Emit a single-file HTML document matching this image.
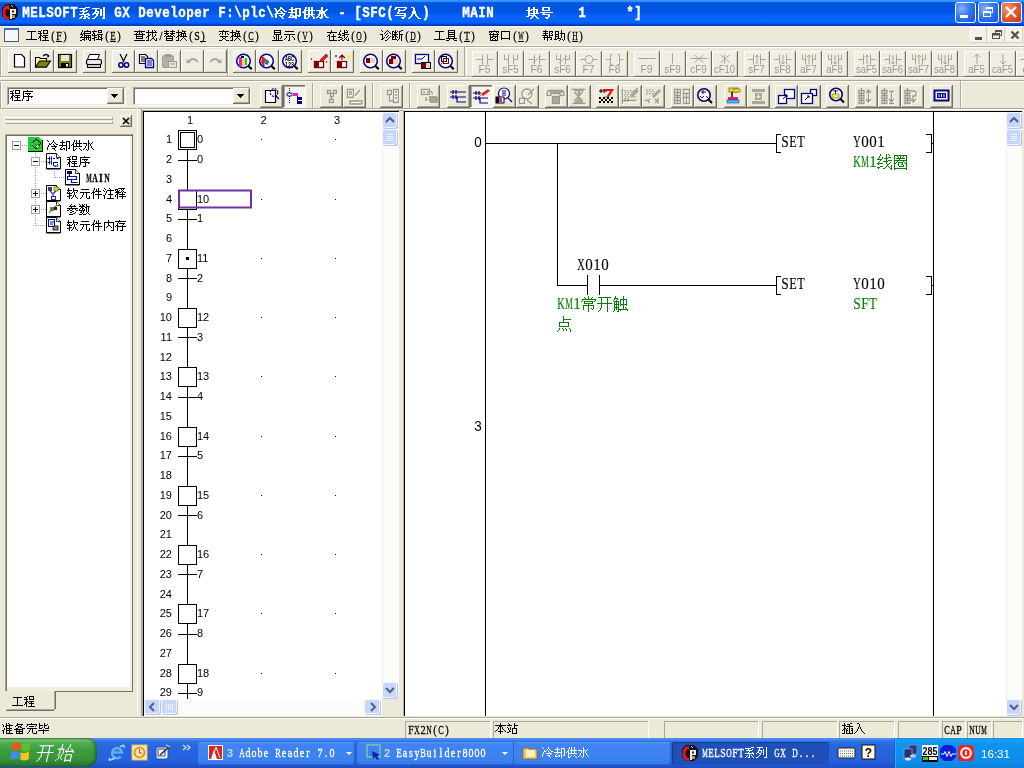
<!DOCTYPE html>
<html><head><meta charset="utf-8"><style>
html,body{margin:0;padding:0;}
body{width:1024px;height:768px;overflow:hidden;position:relative;background:#ECE9D8;font-family:"Liberation Sans",sans-serif;}
body>div{position:absolute;}
svg.ov{position:absolute;left:0;top:0;will-change:transform;}
</style></head><body>
<div style="left:0px;top:0px;width:1024px;height:26px;background:linear-gradient(180deg,#3b97ff 0px,#3090ff 1.5px,#0a5ce8 2.5px,#0054df 5px,#0055e2 12px,#0862fa 16px,#0866ff 22px,#0050e0 24px,#0038b8 25px,#0034b0 26px)"></div>
<div style="left:955px;top:2px;width:21px;height:21px;box-sizing:border-box;border:1px solid #fff;border-radius:3px;background:radial-gradient(circle at 30% 30%,#8AB4FF 0,#3C7BF5 40%,#1F5FE8 75%,#1C56D8 100%)"></div>
<div style="left:978px;top:2px;width:21px;height:21px;box-sizing:border-box;border:1px solid #fff;border-radius:3px;background:radial-gradient(circle at 30% 30%,#8AB4FF 0,#3C7BF5 40%,#1F5FE8 75%,#1C56D8 100%)"></div>
<div style="left:1001px;top:2px;width:21px;height:21px;box-sizing:border-box;border:1px solid #fff;border-radius:3px;background:radial-gradient(circle at 30% 30%,#F4A383 0,#E5603A 40%,#D4441E 75%,#C0391A 100%)"></div>
<div style="left:0px;top:738px;width:1024px;height:30px;background:linear-gradient(180deg,#3a77e6 0px,#5a9cf0 1px,#3d7fe8 2px,#2c6de0 4px,#2764de 10px,#2562dd 22px,#2158d4 27px,#1d4dc0 30px)"></div>
<div style="left:0px;top:738px;width:97px;height:29px;border-radius:0 10px 10px 0;background:linear-gradient(180deg,#3c8f3c 0px,#7cc07a 2px,#4fae4f 5px,#3d9c3d 12px,#3a963a 20px,#2f7f2f 26px,#2a6e2a 29px);box-shadow:inset -2px 0 3px rgba(0,40,0,.45)"></div>
<div style="left:198px;top:742px;width:157px;height:23px;border-radius:3px;background:linear-gradient(180deg,#5a9af7 0,#3f84f2 2px,#3c81f0 18px,#3677e9 23px);box-shadow:inset -1px -1px 0 #2a62d0"></div>
<div style="left:357px;top:742px;width:157px;height:23px;border-radius:3px;background:linear-gradient(180deg,#5a9af7 0,#3f84f2 2px,#3c81f0 18px,#3677e9 23px);box-shadow:inset -1px -1px 0 #2a62d0"></div>
<div style="left:514px;top:742px;width:157px;height:23px;border-radius:3px;background:linear-gradient(180deg,#5a9af7 0,#3f84f2 2px,#3c81f0 18px,#3677e9 23px);box-shadow:inset -1px -1px 0 #2a62d0"></div>
<div style="left:672px;top:742px;width:157px;height:23px;border-radius:3px;background:#1E50B8;box-shadow:inset 1px 1px 1px #123b8e"></div>
<div style="left:894px;top:738px;width:130px;height:30px;background:linear-gradient(180deg,#1a8ee8 0,#16a0f3 2px,#0f94ee 6px,#0d8cea 24px,#0b7fda 30px);box-shadow:inset 1px 0 0 #0a5fc8, inset 2px 0 0 #3aa8f5"></div>
<svg class="ov" width="1024" height="768" viewBox="0 0 1024 768"><path fill="#fff" d="M85 7h5v1h-5zM79 8h7v1h-7zM83 9h2v1h-2zM82 10h2v1h-2zM86 10h2v1h-2zM80 11h7v1h-7zM83 12h2v1h-2zM82 13h2v1h-2zM87 13h2v1h-2zM79 14h11v1h-11zM84 15h2v1h-2zM88 15h2v1h-2zM81 16h2v1h-2zM84 16h4v1h-4zM80 17h2v1h-2zM84 17h2v1h-2zM87 17h2v1h-2zM79 18h2v1h-2zM83 18h3v1h-3zM88 18h2v1h-2zM103 7h2v1h-2zM92 8h8v1h-8zM103 8h2v1h-2zM95 9h2v1h-2zM100 9h2v1h-2zM103 9h2v1h-2zM95 10h2v1h-2zM100 10h2v1h-2zM103 10h2v1h-2zM95 11h4v1h-4zM100 11h2v1h-2zM103 11h2v1h-2zM94 12h2v1h-2zM97 12h2v1h-2zM100 12h2v1h-2zM103 12h2v1h-2zM93 13h6v1h-6zM100 13h2v1h-2zM103 13h2v1h-2zM92 14h2v1h-2zM96 14h2v1h-2zM100 14h2v1h-2zM103 14h2v1h-2zM96 15h2v1h-2zM100 15h2v1h-2zM103 15h2v1h-2zM95 16h2v1h-2zM103 16h2v1h-2zM94 17h2v1h-2zM103 17h2v1h-2zM92 18h3v1h-3zM102 18h3v1h-3zM280 7h2v1h-2zM274 8h2v1h-2zM280 8h3v1h-3zM275 9h2v1h-2zM279 9h2v1h-2zM282 9h2v1h-2zM275 10h2v1h-2zM278 10h2v1h-2zM283 10h2v1h-2zM276 11h3v1h-3zM280 11h2v1h-2zM284 11h3v1h-3zM276 12h2v1h-2zM281 12h2v1h-2zM275 13h10v1h-10zM274 14h3v1h-3zM283 14h2v1h-2zM275 15h2v1h-2zM279 15h2v1h-2zM282 15h2v1h-2zM275 16h2v1h-2zM280 16h3v1h-3zM275 17h2v1h-2zM281 17h2v1h-2zM282 18h2v1h-2zM291 7h2v1h-2zM291 8h2v1h-2zM295 8h6v1h-6zM289 9h8v1h-8zM299 9h2v1h-2zM291 10h2v1h-2zM295 10h2v1h-2zM299 10h2v1h-2zM291 11h2v1h-2zM295 11h2v1h-2zM299 11h2v1h-2zM288 12h9v1h-9zM299 12h2v1h-2zM291 13h2v1h-2zM295 13h2v1h-2zM299 13h2v1h-2zM290 14h2v1h-2zM295 14h2v1h-2zM299 14h2v1h-2zM290 15h4v1h-4zM295 15h6v1h-6zM289 16h2v1h-2zM292 16h5v1h-5zM298 16h2v1h-2zM288 17h9v1h-9zM295 18h2v1h-2zM305 7h2v1h-2zM308 7h2v1h-2zM311 7h2v1h-2zM305 8h2v1h-2zM308 8h2v1h-2zM311 8h2v1h-2zM304 9h2v1h-2zM308 9h2v1h-2zM311 9h2v1h-2zM304 10h11v1h-11zM303 11h3v1h-3zM308 11h2v1h-2zM311 11h2v1h-2zM302 12h4v1h-4zM308 12h2v1h-2zM311 12h2v1h-2zM304 13h2v1h-2zM308 13h2v1h-2zM311 13h2v1h-2zM304 14h11v1h-11zM304 15h2v1h-2zM308 15h2v1h-2zM311 15h2v1h-2zM304 16h2v1h-2zM308 16h2v1h-2zM312 16h2v1h-2zM304 17h2v1h-2zM307 17h2v1h-2zM313 17h2v1h-2zM304 18h4v1h-4zM313 18h2v1h-2zM321 7h2v1h-2zM321 8h2v1h-2zM321 9h2v1h-2zM326 9h2v1h-2zM316 10h7v1h-7zM325 10h2v1h-2zM319 11h7v1h-7zM319 12h6v1h-6zM319 13h6v1h-6zM318 14h2v1h-2zM321 14h2v1h-2zM324 14h2v1h-2zM318 15h2v1h-2zM321 15h2v1h-2zM324 15h2v1h-2zM317 16h2v1h-2zM321 16h2v1h-2zM325 16h2v1h-2zM316 17h2v1h-2zM319 17h4v1h-4zM326 17h3v1h-3zM320 18h2v1h-2zM395 7h12v1h-12zM395 8h2v1h-2zM405 8h2v1h-2zM394 9h2v1h-2zM398 9h2v1h-2zM404 9h2v1h-2zM398 10h7v1h-7zM398 11h2v1h-2zM397 12h2v1h-2zM397 13h9v1h-9zM404 14h2v1h-2zM395 15h11v1h-11zM404 16h2v1h-2zM401 17h4v1h-4zM402 18h2v1h-2zM411 7h3v1h-3zM413 8h2v1h-2zM413 9h2v1h-2zM413 10h2v1h-2zM412 11h4v1h-4zM412 12h4v1h-4zM412 13h4v1h-4zM411 14h2v1h-2zM415 14h2v1h-2zM411 15h2v1h-2zM415 15h2v1h-2zM410 16h2v1h-2zM416 16h2v1h-2zM409 17h2v1h-2zM417 17h2v1h-2zM408 18h2v1h-2zM418 18h3v1h-3zM528 7h2v1h-2zM533 7h2v1h-2zM528 8h2v1h-2zM533 8h2v1h-2zM528 9h2v1h-2zM531 9h7v1h-7zM526 10h6v1h-6zM533 10h2v1h-2zM536 10h2v1h-2zM528 11h2v1h-2zM533 11h2v1h-2zM536 11h2v1h-2zM528 12h2v1h-2zM533 12h2v1h-2zM536 12h2v1h-2zM528 13h11v1h-11zM528 14h2v1h-2zM533 14h2v1h-2zM528 15h8v1h-8zM526 16h3v1h-3zM532 16h2v1h-2zM535 16h2v1h-2zM531 17h2v1h-2zM536 17h2v1h-2zM530 18h2v1h-2zM537 18h2v1h-2zM542 7h8v1h-8zM542 8h2v1h-2zM548 8h2v1h-2zM542 9h2v1h-2zM548 9h2v1h-2zM542 10h8v1h-8zM540 12h13v1h-13zM543 13h2v1h-2zM542 14h8v1h-8zM548 15h2v1h-2zM548 16h2v1h-2zM545 17h4v1h-4zM546 18h2v1h-2z"/><g font-family="Liberation Mono" font-size="13.4" font-weight="bold" fill="#fff" stroke="#fff" stroke-width="0.35"><text transform="translate(26.00 17) scale(0.933 1.1)" text-anchor="middle">M</text><text transform="translate(34.00 17) scale(0.933 1.1)" text-anchor="middle">E</text><text transform="translate(42.00 17) scale(0.933 1.1)" text-anchor="middle">L</text><text transform="translate(50.00 17) scale(0.933 1.1)" text-anchor="middle">S</text><text transform="translate(58.00 17) scale(0.933 1.1)" text-anchor="middle">O</text><text transform="translate(66.00 17) scale(0.933 1.1)" text-anchor="middle">F</text><text transform="translate(74.00 17) scale(0.933 1.1)" text-anchor="middle">T</text><text transform="translate(118.00 17) scale(0.933 1.1)" text-anchor="middle">G</text><text transform="translate(126.00 17) scale(0.933 1.1)" text-anchor="middle">X</text><text transform="translate(142.00 17) scale(0.933 1.1)" text-anchor="middle">D</text><text transform="translate(150.00 17) scale(0.933 1.1)" text-anchor="middle">e</text><text transform="translate(158.00 17) scale(0.933 1.1)" text-anchor="middle">v</text><text transform="translate(166.00 17) scale(0.933 1.1)" text-anchor="middle">e</text><text transform="translate(174.00 17) scale(0.933 1.1)" text-anchor="middle">l</text><text transform="translate(182.00 17) scale(0.933 1.1)" text-anchor="middle">o</text><text transform="translate(190.00 17) scale(0.933 1.1)" text-anchor="middle">p</text><text transform="translate(198.00 17) scale(0.933 1.1)" text-anchor="middle">e</text><text transform="translate(206.00 17) scale(0.933 1.1)" text-anchor="middle">r</text><text transform="translate(222.00 17) scale(0.933 1.1)" text-anchor="middle">F</text><text transform="translate(230.00 17) scale(0.933 1.1)" text-anchor="middle">:</text><text transform="translate(238.00 17) scale(0.933 1.1)" text-anchor="middle">\</text><text transform="translate(246.00 17) scale(0.933 1.1)" text-anchor="middle">p</text><text transform="translate(254.00 17) scale(0.933 1.1)" text-anchor="middle">l</text><text transform="translate(262.00 17) scale(0.933 1.1)" text-anchor="middle">c</text><text transform="translate(270.00 17) scale(0.933 1.1)" text-anchor="middle">\</text><text transform="translate(342.00 17) scale(0.933 1.1)" text-anchor="middle">-</text><text transform="translate(358.00 17) scale(0.933 1.1)" text-anchor="middle">[</text><text transform="translate(366.00 17) scale(0.933 1.1)" text-anchor="middle">S</text><text transform="translate(374.00 17) scale(0.933 1.1)" text-anchor="middle">F</text><text transform="translate(382.00 17) scale(0.933 1.1)" text-anchor="middle">C</text><text transform="translate(390.00 17) scale(0.933 1.1)" text-anchor="middle">(</text><text transform="translate(426.00 17) scale(0.933 1.1)" text-anchor="middle">)</text><text transform="translate(466.00 17) scale(0.933 1.1)" text-anchor="middle">M</text><text transform="translate(474.00 17) scale(0.933 1.1)" text-anchor="middle">A</text><text transform="translate(482.00 17) scale(0.933 1.1)" text-anchor="middle">I</text><text transform="translate(490.00 17) scale(0.933 1.1)" text-anchor="middle">N</text><text transform="translate(582.00 17) scale(0.933 1.1)" text-anchor="middle">1</text><text transform="translate(630.00 17) scale(0.933 1.1)" text-anchor="middle">*</text><text transform="translate(638.00 17) scale(0.933 1.1)" text-anchor="middle">]</text></g>
<path d="M6 4h8l4 4v8l-4 4h-8l-4-4v-8z" fill="#141418"/><path d="M9 6.5q-5 0-5 6t5 6" stroke="#E8141A" stroke-width="3" fill="none"/><path d="M6 8h3v2" stroke="#F04020" fill="none"/><path d="M10 9h6v5h-4v5h-2z" fill="#F2EEE6"/><rect x="12" y="10.5" width="2" height="2" fill="#222"/><rect x="12" y="15" width="3" height="3" fill="#B09A60"/><path d="M11 5l2 2" stroke="#A0E0A0"/>
<rect x="960" y="15" width="8" height="3" fill="#fff" />
<rect x="983.5" y="11.5" width="7" height="5" fill="none" stroke="#fff" stroke-width="1"/><rect x="983" y="11" width="8" height="2" fill="#fff"/><path d="M986.5 9.5v-2h6v5h-2" fill="none" stroke="#fff" stroke-width="1"/><rect x="986" y="7" width="7" height="2" fill="#fff"/>
<path d="M1006 7l10 10M1016 7l-10 10" stroke="#fff" stroke-width="2.2"/>
<rect x="0" y="26" width="1024" height="20" fill="#ECE9D8" />
<rect x="0" y="26" width="1024" height="1" fill="#F2F6FF" />
<rect x="0" y="45" width="1024" height="1" fill="#FBFAF4" />
<rect x="4.5" y="28.5" width="14" height="13" fill="#F4F7FC" stroke="#505A6E"/><rect x="4" y="28" width="15" height="2" fill="#3A6FCC"/>
<rect x="970" y="27" width="17" height="16" fill="#F3F1E8" />
<rect x="970" y="27" width="17" height="1" fill="#FFFFFF" />
<rect x="970" y="27" width="1" height="16" fill="#FFFFFF" />
<rect x="970" y="42" width="17" height="1" fill="#D8D4C4" />
<rect x="986" y="27" width="1" height="16" fill="#D8D4C4" />
<rect x="988" y="27" width="17" height="16" fill="#F3F1E8" />
<rect x="988" y="27" width="17" height="1" fill="#FFFFFF" />
<rect x="988" y="27" width="1" height="16" fill="#FFFFFF" />
<rect x="988" y="42" width="17" height="1" fill="#D8D4C4" />
<rect x="1004" y="27" width="1" height="16" fill="#D8D4C4" />
<rect x="1006" y="27" width="17" height="16" fill="#F3F1E8" />
<rect x="1006" y="27" width="17" height="1" fill="#FFFFFF" />
<rect x="1006" y="27" width="1" height="16" fill="#FFFFFF" />
<rect x="1006" y="42" width="17" height="1" fill="#D8D4C4" />
<rect x="1022" y="27" width="1" height="16" fill="#D8D4C4" />
<rect x="975" y="37" width="7" height="3" fill="#505050" />
<g fill="none" stroke="#505050" stroke-width="1"><rect x="992.5" y="33.5" width="7" height="5"/><path d="M992 34.5h8" stroke-width="2"/><path d="M995.5 33v-2.5h6v5h-2"/><path d="M995 31h7" stroke-width="2"/></g>
<path d="M1011.5 31.5l7 7M1018.5 31.5l-7 7" stroke="#505050" stroke-width="2.2"/>
<path fill="#000" d="M27 31h9v1h-9zM31 32h1v1h-1zM31 33h1v1h-1zM31 34h1v1h-1zM31 35h1v1h-1zM31 36h1v1h-1zM31 37h1v1h-1zM31 38h1v1h-1zM26 39h11v1h-11zM41 30h1v1h-1zM43 30h5v1h-5zM38 31h3v1h-3zM43 31h1v1h-1zM47 31h1v1h-1zM40 32h1v1h-1zM43 32h1v1h-1zM47 32h1v1h-1zM38 33h4v1h-4zM43 33h5v1h-5zM40 34h1v1h-1zM40 35h2v1h-2zM43 35h5v1h-5zM39 36h2v1h-2zM42 36h1v1h-1zM45 36h1v1h-1zM39 37h2v1h-2zM43 37h5v1h-5zM38 38h1v1h-1zM40 38h1v1h-1zM45 38h1v1h-1zM40 39h1v1h-1zM45 39h1v1h-1zM40 40h1v1h-1zM42 40h7v1h-7z"/><g font-family="Liberation Serif" font-size="13" font-weight="normal" fill="#000" stroke="#000" stroke-width="0.3"><text transform="translate(53.00 40) scale(0.800 1)" text-anchor="middle">(</text><text transform="translate(59.00 40) scale(0.761 1)" text-anchor="middle">F</text><text transform="translate(65.00 40) scale(0.800 1)" text-anchor="middle">)</text></g>
<rect x="56" y="41" width="6" height="1" fill="#000" />
<path fill="#000" d="M82 30h1v1h-1zM87 30h1v1h-1zM82 31h1v1h-1zM84 31h7v1h-7zM81 32h1v1h-1zM84 32h1v1h-1zM90 32h1v1h-1zM81 33h1v1h-1zM83 33h8v1h-8zM80 34h3v1h-3zM84 34h1v1h-1zM82 35h1v1h-1zM84 35h7v1h-7zM81 36h1v1h-1zM84 36h1v1h-1zM86 36h1v1h-1zM88 36h1v1h-1zM90 36h1v1h-1zM80 37h11v1h-11zM84 38h1v1h-1zM86 38h1v1h-1zM88 38h1v1h-1zM90 38h1v1h-1zM82 39h3v1h-3zM86 39h1v1h-1zM88 39h1v1h-1zM90 39h1v1h-1zM80 40h2v1h-2zM84 40h1v1h-1zM89 40h2v1h-2zM94 30h1v1h-1zM98 30h4v1h-4zM92 31h5v1h-5zM98 31h1v1h-1zM101 31h1v1h-1zM93 32h1v1h-1zM98 32h4v1h-4zM93 33h2v1h-2zM92 34h1v1h-1zM94 34h1v1h-1zM97 34h6v1h-6zM92 35h5v1h-5zM98 35h1v1h-1zM101 35h1v1h-1zM94 36h1v1h-1zM98 36h2v1h-2zM101 36h1v1h-1zM94 37h3v1h-3zM98 37h1v1h-1zM100 37h2v1h-2zM92 38h3v1h-3zM98 38h1v1h-1zM101 38h2v1h-2zM94 39h1v1h-1zM96 39h6v1h-6zM94 40h1v1h-1zM101 40h1v1h-1z"/><g font-family="Liberation Serif" font-size="13" font-weight="normal" fill="#000" stroke="#000" stroke-width="0.3"><text transform="translate(107.00 40) scale(0.800 1)" text-anchor="middle">(</text><text transform="translate(113.00 40) scale(0.693 1)" text-anchor="middle">E</text><text transform="translate(119.00 40) scale(0.800 1)" text-anchor="middle">)</text></g>
<rect x="110" y="41" width="6" height="1" fill="#000" />
<path fill="#000" d="M139 30h1v1h-1zM134 31h11v1h-11zM137 32h1v1h-1zM139 32h1v1h-1zM141 32h1v1h-1zM136 33h1v1h-1zM139 33h1v1h-1zM142 33h1v1h-1zM134 34h11v1h-11zM136 35h1v1h-1zM142 35h1v1h-1zM136 36h7v1h-7zM136 37h1v1h-1zM142 37h1v1h-1zM136 38h7v1h-7zM134 40h11v1h-11zM148 30h1v1h-1zM152 30h1v1h-1zM154 30h1v1h-1zM148 31h1v1h-1zM152 31h1v1h-1zM155 31h1v1h-1zM146 32h11v1h-11zM148 33h1v1h-1zM152 33h1v1h-1zM148 34h1v1h-1zM150 34h1v1h-1zM152 34h1v1h-1zM155 34h1v1h-1zM148 35h2v1h-2zM152 35h1v1h-1zM155 35h1v1h-1zM147 36h2v1h-2zM152 36h1v1h-1zM154 36h1v1h-1zM146 37h1v1h-1zM148 37h1v1h-1zM153 37h1v1h-1zM148 38h1v1h-1zM152 38h2v1h-2zM156 38h1v1h-1zM148 39h1v1h-1zM151 39h1v1h-1zM154 39h1v1h-1zM156 39h1v1h-1zM146 40h3v1h-3zM150 40h1v1h-1zM155 40h2v1h-2zM166 30h1v1h-1zM172 30h1v1h-1zM164 31h5v1h-5zM170 31h5v1h-5zM166 32h1v1h-1zM172 32h1v1h-1zM164 33h5v1h-5zM170 33h5v1h-5zM166 34h2v1h-2zM171 34h2v1h-2zM165 35h1v1h-1zM168 35h1v1h-1zM170 35h1v1h-1zM173 35h1v1h-1zM164 36h1v1h-1zM166 36h7v1h-7zM174 36h1v1h-1zM166 37h1v1h-1zM172 37h1v1h-1zM166 38h7v1h-7zM166 39h1v1h-1zM172 39h1v1h-1zM166 40h7v1h-7zM178 30h1v1h-1zM182 30h1v1h-1zM178 31h1v1h-1zM182 31h4v1h-4zM176 32h6v1h-6zM184 32h1v1h-1zM178 33h1v1h-1zM181 33h5v1h-5zM178 34h1v1h-1zM180 34h2v1h-2zM183 34h1v1h-1zM185 34h1v1h-1zM178 35h2v1h-2zM181 35h1v1h-1zM183 35h1v1h-1zM185 35h1v1h-1zM177 36h2v1h-2zM180 36h7v1h-7zM176 37h1v1h-1zM178 37h1v1h-1zM183 37h1v1h-1zM178 38h1v1h-1zM182 38h1v1h-1zM184 38h1v1h-1zM178 39h1v1h-1zM181 39h1v1h-1zM185 39h1v1h-1zM176 40h3v1h-3zM180 40h1v1h-1zM186 40h1v1h-1z"/><g font-family="Liberation Serif" font-size="13" font-weight="normal" fill="#000" stroke="#000" stroke-width="0.3"><text transform="translate(161.00 40) scale(0.800 1)" text-anchor="middle">/</text><text transform="translate(191.00 40) scale(0.800 1)" text-anchor="middle">(</text><text transform="translate(197.00 40) scale(0.761 1)" text-anchor="middle">S</text><text transform="translate(203.00 40) scale(0.800 1)" text-anchor="middle">)</text></g>
<rect x="200" y="41" width="6" height="1" fill="#000" />
<path fill="#000" d="M223 30h1v1h-1zM219 31h10v1h-10zM222 32h1v1h-1zM225 32h1v1h-1zM220 33h1v1h-1zM222 33h1v1h-1zM225 33h1v1h-1zM227 33h1v1h-1zM219 34h1v1h-1zM222 34h1v1h-1zM225 34h1v1h-1zM228 34h1v1h-1zM220 36h8v1h-8zM222 37h1v1h-1zM225 37h1v1h-1zM223 38h2v1h-2zM222 39h1v1h-1zM225 39h1v1h-1zM219 40h3v1h-3zM226 40h3v1h-3zM232 30h1v1h-1zM236 30h1v1h-1zM232 31h1v1h-1zM236 31h4v1h-4zM230 32h6v1h-6zM238 32h1v1h-1zM232 33h1v1h-1zM235 33h5v1h-5zM232 34h1v1h-1zM234 34h2v1h-2zM237 34h1v1h-1zM239 34h1v1h-1zM232 35h2v1h-2zM235 35h1v1h-1zM237 35h1v1h-1zM239 35h1v1h-1zM231 36h2v1h-2zM234 36h7v1h-7zM230 37h1v1h-1zM232 37h1v1h-1zM237 37h1v1h-1zM232 38h1v1h-1zM236 38h1v1h-1zM238 38h1v1h-1zM232 39h1v1h-1zM235 39h1v1h-1zM239 39h1v1h-1zM230 40h3v1h-3zM234 40h1v1h-1zM240 40h1v1h-1z"/><g font-family="Liberation Serif" font-size="13" font-weight="normal" fill="#000" stroke="#000" stroke-width="0.3"><text transform="translate(245.00 40) scale(0.800 1)" text-anchor="middle">(</text><text transform="translate(251.00 40) scale(0.634 1)" text-anchor="middle">C</text><text transform="translate(257.00 40) scale(0.800 1)" text-anchor="middle">)</text></g>
<rect x="248" y="41" width="6" height="1" fill="#000" />
<path fill="#000" d="M274 30h7v1h-7zM274 31h1v1h-1zM280 31h1v1h-1zM274 32h7v1h-7zM274 33h1v1h-1zM280 33h1v1h-1zM274 34h7v1h-7zM276 35h1v1h-1zM278 35h1v1h-1zM273 36h1v1h-1zM276 36h1v1h-1zM278 36h1v1h-1zM281 36h1v1h-1zM274 37h1v1h-1zM276 37h1v1h-1zM278 37h1v1h-1zM281 37h1v1h-1zM274 38h1v1h-1zM276 38h1v1h-1zM278 38h1v1h-1zM280 38h1v1h-1zM276 39h1v1h-1zM278 39h1v1h-1zM272 40h11v1h-11zM285 31h9v1h-9zM284 34h11v1h-11zM289 35h1v1h-1zM286 36h1v1h-1zM289 36h1v1h-1zM292 36h1v1h-1zM286 37h1v1h-1zM289 37h1v1h-1zM293 37h1v1h-1zM285 38h1v1h-1zM289 38h1v1h-1zM294 38h1v1h-1zM284 39h1v1h-1zM289 39h1v1h-1zM294 39h1v1h-1zM288 40h2v1h-2z"/><g font-family="Liberation Serif" font-size="13" font-weight="normal" fill="#000" stroke="#000" stroke-width="0.3"><text transform="translate(299.00 40) scale(0.800 1)" text-anchor="middle">(</text><text transform="translate(305.00 40) scale(0.586 1)" text-anchor="middle">V</text><text transform="translate(311.00 40) scale(0.800 1)" text-anchor="middle">)</text></g>
<rect x="302" y="41" width="6" height="1" fill="#000" />
<path fill="#000" d="M331 30h1v1h-1zM331 31h1v1h-1zM327 32h10v1h-10zM330 33h1v1h-1zM329 34h1v1h-1zM333 34h1v1h-1zM328 35h2v1h-2zM333 35h1v1h-1zM327 36h1v1h-1zM329 36h1v1h-1zM331 36h5v1h-5zM329 37h1v1h-1zM333 37h1v1h-1zM329 38h1v1h-1zM333 38h1v1h-1zM329 39h1v1h-1zM333 39h1v1h-1zM329 40h8v1h-8zM340 30h1v1h-1zM344 30h1v1h-1zM346 30h1v1h-1zM340 31h1v1h-1zM344 31h1v1h-1zM347 31h1v1h-1zM339 32h1v1h-1zM344 32h4v1h-4zM339 33h1v1h-1zM342 33h3v1h-3zM338 34h3v1h-3zM344 34h5v1h-5zM340 35h1v1h-1zM342 35h3v1h-3zM339 36h1v1h-1zM344 36h1v1h-1zM347 36h1v1h-1zM338 37h4v1h-4zM344 37h1v1h-1zM346 37h1v1h-1zM342 38h1v1h-1zM345 38h1v1h-1zM348 38h1v1h-1zM340 39h2v1h-2zM344 39h1v1h-1zM346 39h1v1h-1zM348 39h1v1h-1zM338 40h2v1h-2zM342 40h2v1h-2zM347 40h2v1h-2z"/><g font-family="Liberation Serif" font-size="13" font-weight="normal" fill="#000" stroke="#000" stroke-width="0.3"><text transform="translate(353.00 40) scale(0.800 1)" text-anchor="middle">(</text><text transform="translate(359.00 40) scale(0.586 1)" text-anchor="middle">O</text><text transform="translate(365.00 40) scale(0.800 1)" text-anchor="middle">)</text></g>
<rect x="356" y="41" width="6" height="1" fill="#000" />
<path fill="#000" d="M381 30h1v1h-1zM387 30h1v1h-1zM382 31h1v1h-1zM386 31h1v1h-1zM388 31h1v1h-1zM385 32h1v1h-1zM389 32h1v1h-1zM384 33h1v1h-1zM387 33h1v1h-1zM390 33h1v1h-1zM380 34h3v1h-3zM386 34h1v1h-1zM382 35h1v1h-1zM385 35h1v1h-1zM388 35h1v1h-1zM382 36h1v1h-1zM387 36h1v1h-1zM390 36h1v1h-1zM382 37h1v1h-1zM384 37h1v1h-1zM386 37h1v1h-1zM389 37h1v1h-1zM382 38h2v1h-2zM388 38h1v1h-1zM381 39h2v1h-2zM387 39h1v1h-1zM385 40h2v1h-2zM395 30h1v1h-1zM401 30h2v1h-2zM392 31h2v1h-2zM395 31h1v1h-1zM397 31h1v1h-1zM399 31h2v1h-2zM392 32h1v1h-1zM394 32h3v1h-3zM399 32h1v1h-1zM392 33h1v1h-1zM395 33h1v1h-1zM399 33h1v1h-1zM392 34h6v1h-6zM399 34h4v1h-4zM392 35h1v1h-1zM394 35h2v1h-2zM399 35h1v1h-1zM401 35h1v1h-1zM392 36h2v1h-2zM395 36h2v1h-2zM399 36h1v1h-1zM401 36h1v1h-1zM392 37h2v1h-2zM395 37h1v1h-1zM397 37h1v1h-1zM399 37h1v1h-1zM401 37h1v1h-1zM392 38h1v1h-1zM395 38h1v1h-1zM399 38h1v1h-1zM401 38h1v1h-1zM392 39h5v1h-5zM398 39h1v1h-1zM401 39h1v1h-1zM397 40h1v1h-1zM401 40h1v1h-1z"/><g font-family="Liberation Serif" font-size="13" font-weight="normal" fill="#000" stroke="#000" stroke-width="0.3"><text transform="translate(407.00 40) scale(0.800 1)" text-anchor="middle">(</text><text transform="translate(413.00 40) scale(0.586 1)" text-anchor="middle">D</text><text transform="translate(419.00 40) scale(0.800 1)" text-anchor="middle">)</text></g>
<rect x="410" y="41" width="6" height="1" fill="#000" />
<path fill="#000" d="M435 31h9v1h-9zM439 32h1v1h-1zM439 33h1v1h-1zM439 34h1v1h-1zM439 35h1v1h-1zM439 36h1v1h-1zM439 37h1v1h-1zM439 38h1v1h-1zM434 39h11v1h-11zM448 30h7v1h-7zM448 31h1v1h-1zM454 31h1v1h-1zM448 32h7v1h-7zM448 33h1v1h-1zM454 33h1v1h-1zM448 34h7v1h-7zM448 35h1v1h-1zM454 35h1v1h-1zM448 36h7v1h-7zM448 37h1v1h-1zM454 37h1v1h-1zM446 38h11v1h-11zM449 39h1v1h-1zM453 39h1v1h-1zM446 40h3v1h-3zM454 40h3v1h-3z"/><g font-family="Liberation Serif" font-size="13" font-weight="normal" fill="#000" stroke="#000" stroke-width="0.3"><text transform="translate(461.00 40) scale(0.800 1)" text-anchor="middle">(</text><text transform="translate(467.00 40) scale(0.693 1)" text-anchor="middle">T</text><text transform="translate(473.00 40) scale(0.800 1)" text-anchor="middle">)</text></g>
<rect x="464" y="41" width="6" height="1" fill="#000" />
<path fill="#000" d="M494 30h1v1h-1zM489 31h10v1h-10zM489 32h1v1h-1zM491 32h1v1h-1zM496 32h1v1h-1zM498 32h1v1h-1zM490 33h1v1h-1zM493 33h1v1h-1zM497 33h1v1h-1zM489 34h10v1h-10zM490 35h1v1h-1zM493 35h1v1h-1zM497 35h1v1h-1zM490 36h1v1h-1zM492 36h6v1h-6zM490 37h3v1h-3zM495 37h1v1h-1zM497 37h1v1h-1zM490 38h1v1h-1zM493 38h2v1h-2zM497 38h1v1h-1zM490 39h1v1h-1zM492 39h1v1h-1zM495 39h1v1h-1zM497 39h1v1h-1zM490 40h8v1h-8zM501 31h9v1h-9zM501 32h1v1h-1zM509 32h1v1h-1zM501 33h1v1h-1zM509 33h1v1h-1zM501 34h1v1h-1zM509 34h1v1h-1zM501 35h1v1h-1zM509 35h1v1h-1zM501 36h1v1h-1zM509 36h1v1h-1zM501 37h1v1h-1zM509 37h1v1h-1zM501 38h9v1h-9zM501 39h1v1h-1zM509 39h1v1h-1z"/><g font-family="Liberation Serif" font-size="13" font-weight="normal" fill="#000" stroke="#000" stroke-width="0.3"><text transform="translate(515.00 40) scale(0.800 1)" text-anchor="middle">(</text><text transform="translate(521.00 40) scale(0.448 1)" text-anchor="middle">W</text><text transform="translate(527.00 40) scale(0.800 1)" text-anchor="middle">)</text></g>
<rect x="518" y="41" width="6" height="1" fill="#000" />
<path fill="#000" d="M545 30h1v1h-1zM543 31h5v1h-5zM549 31h4v1h-4zM545 32h1v1h-1zM549 32h1v1h-1zM552 32h1v1h-1zM543 33h5v1h-5zM549 33h1v1h-1zM551 33h1v1h-1zM545 34h1v1h-1zM549 34h1v1h-1zM552 34h1v1h-1zM542 35h6v1h-6zM549 35h4v1h-4zM544 36h1v1h-1zM547 36h1v1h-1zM549 36h1v1h-1zM543 37h9v1h-9zM544 38h1v1h-1zM547 38h1v1h-1zM551 38h1v1h-1zM544 39h1v1h-1zM547 39h1v1h-1zM550 39h2v1h-2zM547 40h1v1h-1zM561 30h1v1h-1zM555 31h4v1h-4zM561 31h1v1h-1zM555 32h1v1h-1zM558 32h1v1h-1zM561 32h1v1h-1zM555 33h1v1h-1zM558 33h1v1h-1zM560 33h5v1h-5zM555 34h4v1h-4zM561 34h1v1h-1zM564 34h1v1h-1zM555 35h1v1h-1zM558 35h1v1h-1zM561 35h1v1h-1zM564 35h1v1h-1zM555 36h4v1h-4zM561 36h1v1h-1zM564 36h1v1h-1zM555 37h1v1h-1zM558 37h1v1h-1zM561 37h1v1h-1zM564 37h1v1h-1zM555 38h1v1h-1zM557 38h4v1h-4zM564 38h1v1h-1zM554 39h3v1h-3zM560 39h1v1h-1zM562 39h1v1h-1zM564 39h1v1h-1zM559 40h1v1h-1zM563 40h1v1h-1z"/><g font-family="Liberation Serif" font-size="13" font-weight="normal" fill="#000" stroke="#000" stroke-width="0.3"><text transform="translate(569.00 40) scale(0.800 1)" text-anchor="middle">(</text><text transform="translate(575.00 40) scale(0.586 1)" text-anchor="middle">H</text><text transform="translate(581.00 40) scale(0.800 1)" text-anchor="middle">)</text></g>
<rect x="572" y="41" width="6" height="1" fill="#000" />
<rect x="0" y="46" width="1024" height="1" fill="#ACA899" />
<rect x="0" y="47" width="1024" height="1" fill="#FFFFFF" />
<rect x="0" y="76" width="1024" height="1" fill="#ACA899" />
<rect x="0" y="77" width="1024" height="1" fill="#FFFFFF" />
<rect x="0" y="80" width="1024" height="1" fill="#ACA899" />
<rect x="0" y="81" width="1024" height="1" fill="#FFFFFF" />
<rect x="0" y="108" width="1024" height="1" fill="#ACA899" />
<rect x="0" y="109" width="1024" height="1" fill="#FFFFFF" />
<rect x="8" y="50" width="23" height="23" fill="#EFEDE4" />
<rect x="8" y="50" width="22" height="1" fill="#FFFFFF" />
<rect x="8" y="50" width="1" height="22" fill="#FFFFFF" />
<rect x="8" y="72" width="23" height="1" fill="#716F64" />
<rect x="30" y="50" width="1" height="23" fill="#716F64" />
<rect x="9" y="71" width="21" height="1" fill="#D6D3C6" />
<rect x="29" y="51" width="1" height="21" fill="#D6D3C6" />
<rect x="31" y="50" width="23" height="23" fill="#EFEDE4" />
<rect x="31" y="50" width="22" height="1" fill="#FFFFFF" />
<rect x="31" y="50" width="1" height="22" fill="#FFFFFF" />
<rect x="31" y="72" width="23" height="1" fill="#716F64" />
<rect x="53" y="50" width="1" height="23" fill="#716F64" />
<rect x="32" y="71" width="21" height="1" fill="#D6D3C6" />
<rect x="52" y="51" width="1" height="21" fill="#D6D3C6" />
<rect x="54" y="50" width="23" height="23" fill="#EFEDE4" />
<rect x="54" y="50" width="22" height="1" fill="#FFFFFF" />
<rect x="54" y="50" width="1" height="22" fill="#FFFFFF" />
<rect x="54" y="72" width="23" height="1" fill="#716F64" />
<rect x="76" y="50" width="1" height="23" fill="#716F64" />
<rect x="55" y="71" width="21" height="1" fill="#D6D3C6" />
<rect x="75" y="51" width="1" height="21" fill="#D6D3C6" />
<rect x="83" y="50" width="23" height="23" fill="#EFEDE4" />
<rect x="83" y="50" width="22" height="1" fill="#FFFFFF" />
<rect x="83" y="50" width="1" height="22" fill="#FFFFFF" />
<rect x="83" y="72" width="23" height="1" fill="#716F64" />
<rect x="105" y="50" width="1" height="23" fill="#716F64" />
<rect x="84" y="71" width="21" height="1" fill="#D6D3C6" />
<rect x="104" y="51" width="1" height="21" fill="#D6D3C6" />
<rect x="112" y="50" width="23" height="23" fill="#EFEDE4" />
<rect x="112" y="50" width="22" height="1" fill="#FFFFFF" />
<rect x="112" y="50" width="1" height="22" fill="#FFFFFF" />
<rect x="112" y="72" width="23" height="1" fill="#716F64" />
<rect x="134" y="50" width="1" height="23" fill="#716F64" />
<rect x="113" y="71" width="21" height="1" fill="#D6D3C6" />
<rect x="133" y="51" width="1" height="21" fill="#D6D3C6" />
<rect x="135" y="50" width="23" height="23" fill="#EFEDE4" />
<rect x="135" y="50" width="22" height="1" fill="#FFFFFF" />
<rect x="135" y="50" width="1" height="22" fill="#FFFFFF" />
<rect x="135" y="72" width="23" height="1" fill="#716F64" />
<rect x="157" y="50" width="1" height="23" fill="#716F64" />
<rect x="136" y="71" width="21" height="1" fill="#D6D3C6" />
<rect x="156" y="51" width="1" height="21" fill="#D6D3C6" />
<rect x="158" y="50" width="23" height="23" fill="#EFEDE4" />
<rect x="158" y="50" width="22" height="1" fill="#FFFFFF" />
<rect x="158" y="50" width="1" height="22" fill="#FFFFFF" />
<rect x="158" y="72" width="23" height="1" fill="#716F64" />
<rect x="180" y="50" width="1" height="23" fill="#716F64" />
<rect x="159" y="71" width="21" height="1" fill="#D6D3C6" />
<rect x="179" y="51" width="1" height="21" fill="#D6D3C6" />
<rect x="181" y="50" width="23" height="23" fill="#EFEDE4" />
<rect x="181" y="50" width="22" height="1" fill="#FFFFFF" />
<rect x="181" y="50" width="1" height="22" fill="#FFFFFF" />
<rect x="181" y="72" width="23" height="1" fill="#716F64" />
<rect x="203" y="50" width="1" height="23" fill="#716F64" />
<rect x="182" y="71" width="21" height="1" fill="#D6D3C6" />
<rect x="202" y="51" width="1" height="21" fill="#D6D3C6" />
<rect x="204" y="50" width="23" height="23" fill="#EFEDE4" />
<rect x="204" y="50" width="22" height="1" fill="#FFFFFF" />
<rect x="204" y="50" width="1" height="22" fill="#FFFFFF" />
<rect x="204" y="72" width="23" height="1" fill="#716F64" />
<rect x="226" y="50" width="1" height="23" fill="#716F64" />
<rect x="205" y="71" width="21" height="1" fill="#D6D3C6" />
<rect x="225" y="51" width="1" height="21" fill="#D6D3C6" />
<rect x="233" y="50" width="23" height="23" fill="#EFEDE4" />
<rect x="233" y="50" width="22" height="1" fill="#FFFFFF" />
<rect x="233" y="50" width="1" height="22" fill="#FFFFFF" />
<rect x="233" y="72" width="23" height="1" fill="#716F64" />
<rect x="255" y="50" width="1" height="23" fill="#716F64" />
<rect x="234" y="71" width="21" height="1" fill="#D6D3C6" />
<rect x="254" y="51" width="1" height="21" fill="#D6D3C6" />
<rect x="256" y="50" width="23" height="23" fill="#EFEDE4" />
<rect x="256" y="50" width="22" height="1" fill="#FFFFFF" />
<rect x="256" y="50" width="1" height="22" fill="#FFFFFF" />
<rect x="256" y="72" width="23" height="1" fill="#716F64" />
<rect x="278" y="50" width="1" height="23" fill="#716F64" />
<rect x="257" y="71" width="21" height="1" fill="#D6D3C6" />
<rect x="277" y="51" width="1" height="21" fill="#D6D3C6" />
<rect x="279" y="50" width="23" height="23" fill="#EFEDE4" />
<rect x="279" y="50" width="22" height="1" fill="#FFFFFF" />
<rect x="279" y="50" width="1" height="22" fill="#FFFFFF" />
<rect x="279" y="72" width="23" height="1" fill="#716F64" />
<rect x="301" y="50" width="1" height="23" fill="#716F64" />
<rect x="280" y="71" width="21" height="1" fill="#D6D3C6" />
<rect x="300" y="51" width="1" height="21" fill="#D6D3C6" />
<rect x="308" y="50" width="23" height="23" fill="#EFEDE4" />
<rect x="308" y="50" width="22" height="1" fill="#FFFFFF" />
<rect x="308" y="50" width="1" height="22" fill="#FFFFFF" />
<rect x="308" y="72" width="23" height="1" fill="#716F64" />
<rect x="330" y="50" width="1" height="23" fill="#716F64" />
<rect x="309" y="71" width="21" height="1" fill="#D6D3C6" />
<rect x="329" y="51" width="1" height="21" fill="#D6D3C6" />
<rect x="331" y="50" width="23" height="23" fill="#EFEDE4" />
<rect x="331" y="50" width="22" height="1" fill="#FFFFFF" />
<rect x="331" y="50" width="1" height="22" fill="#FFFFFF" />
<rect x="331" y="72" width="23" height="1" fill="#716F64" />
<rect x="353" y="50" width="1" height="23" fill="#716F64" />
<rect x="332" y="71" width="21" height="1" fill="#D6D3C6" />
<rect x="352" y="51" width="1" height="21" fill="#D6D3C6" />
<rect x="360" y="50" width="23" height="23" fill="#EFEDE4" />
<rect x="360" y="50" width="22" height="1" fill="#FFFFFF" />
<rect x="360" y="50" width="1" height="22" fill="#FFFFFF" />
<rect x="360" y="72" width="23" height="1" fill="#716F64" />
<rect x="382" y="50" width="1" height="23" fill="#716F64" />
<rect x="361" y="71" width="21" height="1" fill="#D6D3C6" />
<rect x="381" y="51" width="1" height="21" fill="#D6D3C6" />
<rect x="383" y="50" width="23" height="23" fill="#EFEDE4" />
<rect x="383" y="50" width="22" height="1" fill="#FFFFFF" />
<rect x="383" y="50" width="1" height="22" fill="#FFFFFF" />
<rect x="383" y="72" width="23" height="1" fill="#716F64" />
<rect x="405" y="50" width="1" height="23" fill="#716F64" />
<rect x="384" y="71" width="21" height="1" fill="#D6D3C6" />
<rect x="404" y="51" width="1" height="21" fill="#D6D3C6" />
<rect x="412" y="50" width="23" height="23" fill="#EFEDE4" />
<rect x="412" y="50" width="22" height="1" fill="#FFFFFF" />
<rect x="412" y="50" width="1" height="22" fill="#FFFFFF" />
<rect x="412" y="72" width="23" height="1" fill="#716F64" />
<rect x="434" y="50" width="1" height="23" fill="#716F64" />
<rect x="413" y="71" width="21" height="1" fill="#D6D3C6" />
<rect x="433" y="51" width="1" height="21" fill="#D6D3C6" />
<rect x="435" y="50" width="23" height="23" fill="#EFEDE4" />
<rect x="435" y="50" width="22" height="1" fill="#FFFFFF" />
<rect x="435" y="50" width="1" height="22" fill="#FFFFFF" />
<rect x="435" y="72" width="23" height="1" fill="#716F64" />
<rect x="457" y="50" width="1" height="23" fill="#716F64" />
<rect x="436" y="71" width="21" height="1" fill="#D6D3C6" />
<rect x="456" y="51" width="1" height="21" fill="#D6D3C6" />
<rect x="472" y="51" width="26" height="26" fill="#EFEDE4" />
<rect x="472" y="51" width="25" height="1" fill="#FFFFFF" />
<rect x="472" y="51" width="1" height="25" fill="#FFFFFF" />
<rect x="472" y="76" width="26" height="1" fill="#716F64" />
<rect x="497" y="51" width="1" height="26" fill="#716F64" />
<rect x="473" y="75" width="24" height="1" fill="#D6D3C6" />
<rect x="496" y="52" width="1" height="24" fill="#D6D3C6" />
<rect x="498" y="51" width="26" height="26" fill="#EFEDE4" />
<rect x="498" y="51" width="25" height="1" fill="#FFFFFF" />
<rect x="498" y="51" width="1" height="25" fill="#FFFFFF" />
<rect x="498" y="76" width="26" height="1" fill="#716F64" />
<rect x="523" y="51" width="1" height="26" fill="#716F64" />
<rect x="499" y="75" width="24" height="1" fill="#D6D3C6" />
<rect x="522" y="52" width="1" height="24" fill="#D6D3C6" />
<rect x="524" y="51" width="26" height="26" fill="#EFEDE4" />
<rect x="524" y="51" width="25" height="1" fill="#FFFFFF" />
<rect x="524" y="51" width="1" height="25" fill="#FFFFFF" />
<rect x="524" y="76" width="26" height="1" fill="#716F64" />
<rect x="549" y="51" width="1" height="26" fill="#716F64" />
<rect x="525" y="75" width="24" height="1" fill="#D6D3C6" />
<rect x="548" y="52" width="1" height="24" fill="#D6D3C6" />
<rect x="550" y="51" width="26" height="26" fill="#EFEDE4" />
<rect x="550" y="51" width="25" height="1" fill="#FFFFFF" />
<rect x="550" y="51" width="1" height="25" fill="#FFFFFF" />
<rect x="550" y="76" width="26" height="1" fill="#716F64" />
<rect x="575" y="51" width="1" height="26" fill="#716F64" />
<rect x="551" y="75" width="24" height="1" fill="#D6D3C6" />
<rect x="574" y="52" width="1" height="24" fill="#D6D3C6" />
<rect x="576" y="51" width="26" height="26" fill="#EFEDE4" />
<rect x="576" y="51" width="25" height="1" fill="#FFFFFF" />
<rect x="576" y="51" width="1" height="25" fill="#FFFFFF" />
<rect x="576" y="76" width="26" height="1" fill="#716F64" />
<rect x="601" y="51" width="1" height="26" fill="#716F64" />
<rect x="577" y="75" width="24" height="1" fill="#D6D3C6" />
<rect x="600" y="52" width="1" height="24" fill="#D6D3C6" />
<rect x="602" y="51" width="26" height="26" fill="#EFEDE4" />
<rect x="602" y="51" width="25" height="1" fill="#FFFFFF" />
<rect x="602" y="51" width="1" height="25" fill="#FFFFFF" />
<rect x="602" y="76" width="26" height="1" fill="#716F64" />
<rect x="627" y="51" width="1" height="26" fill="#716F64" />
<rect x="603" y="75" width="24" height="1" fill="#D6D3C6" />
<rect x="626" y="52" width="1" height="24" fill="#D6D3C6" />
<rect x="634" y="51" width="26" height="26" fill="#EFEDE4" />
<rect x="634" y="51" width="25" height="1" fill="#FFFFFF" />
<rect x="634" y="51" width="1" height="25" fill="#FFFFFF" />
<rect x="634" y="76" width="26" height="1" fill="#716F64" />
<rect x="659" y="51" width="1" height="26" fill="#716F64" />
<rect x="635" y="75" width="24" height="1" fill="#D6D3C6" />
<rect x="658" y="52" width="1" height="24" fill="#D6D3C6" />
<rect x="660" y="51" width="26" height="26" fill="#EFEDE4" />
<rect x="660" y="51" width="25" height="1" fill="#FFFFFF" />
<rect x="660" y="51" width="1" height="25" fill="#FFFFFF" />
<rect x="660" y="76" width="26" height="1" fill="#716F64" />
<rect x="685" y="51" width="1" height="26" fill="#716F64" />
<rect x="661" y="75" width="24" height="1" fill="#D6D3C6" />
<rect x="684" y="52" width="1" height="24" fill="#D6D3C6" />
<rect x="686" y="51" width="26" height="26" fill="#EFEDE4" />
<rect x="686" y="51" width="25" height="1" fill="#FFFFFF" />
<rect x="686" y="51" width="1" height="25" fill="#FFFFFF" />
<rect x="686" y="76" width="26" height="1" fill="#716F64" />
<rect x="711" y="51" width="1" height="26" fill="#716F64" />
<rect x="687" y="75" width="24" height="1" fill="#D6D3C6" />
<rect x="710" y="52" width="1" height="24" fill="#D6D3C6" />
<rect x="712" y="51" width="26" height="26" fill="#EFEDE4" />
<rect x="712" y="51" width="25" height="1" fill="#FFFFFF" />
<rect x="712" y="51" width="1" height="25" fill="#FFFFFF" />
<rect x="712" y="76" width="26" height="1" fill="#716F64" />
<rect x="737" y="51" width="1" height="26" fill="#716F64" />
<rect x="713" y="75" width="24" height="1" fill="#D6D3C6" />
<rect x="736" y="52" width="1" height="24" fill="#D6D3C6" />
<rect x="744" y="51" width="26" height="26" fill="#EFEDE4" />
<rect x="744" y="51" width="25" height="1" fill="#FFFFFF" />
<rect x="744" y="51" width="1" height="25" fill="#FFFFFF" />
<rect x="744" y="76" width="26" height="1" fill="#716F64" />
<rect x="769" y="51" width="1" height="26" fill="#716F64" />
<rect x="745" y="75" width="24" height="1" fill="#D6D3C6" />
<rect x="768" y="52" width="1" height="24" fill="#D6D3C6" />
<rect x="770" y="51" width="26" height="26" fill="#EFEDE4" />
<rect x="770" y="51" width="25" height="1" fill="#FFFFFF" />
<rect x="770" y="51" width="1" height="25" fill="#FFFFFF" />
<rect x="770" y="76" width="26" height="1" fill="#716F64" />
<rect x="795" y="51" width="1" height="26" fill="#716F64" />
<rect x="771" y="75" width="24" height="1" fill="#D6D3C6" />
<rect x="794" y="52" width="1" height="24" fill="#D6D3C6" />
<rect x="796" y="51" width="26" height="26" fill="#EFEDE4" />
<rect x="796" y="51" width="25" height="1" fill="#FFFFFF" />
<rect x="796" y="51" width="1" height="25" fill="#FFFFFF" />
<rect x="796" y="76" width="26" height="1" fill="#716F64" />
<rect x="821" y="51" width="1" height="26" fill="#716F64" />
<rect x="797" y="75" width="24" height="1" fill="#D6D3C6" />
<rect x="820" y="52" width="1" height="24" fill="#D6D3C6" />
<rect x="822" y="51" width="26" height="26" fill="#EFEDE4" />
<rect x="822" y="51" width="25" height="1" fill="#FFFFFF" />
<rect x="822" y="51" width="1" height="25" fill="#FFFFFF" />
<rect x="822" y="76" width="26" height="1" fill="#716F64" />
<rect x="847" y="51" width="1" height="26" fill="#716F64" />
<rect x="823" y="75" width="24" height="1" fill="#D6D3C6" />
<rect x="846" y="52" width="1" height="24" fill="#D6D3C6" />
<rect x="854" y="51" width="26" height="26" fill="#EFEDE4" />
<rect x="854" y="51" width="25" height="1" fill="#FFFFFF" />
<rect x="854" y="51" width="1" height="25" fill="#FFFFFF" />
<rect x="854" y="76" width="26" height="1" fill="#716F64" />
<rect x="879" y="51" width="1" height="26" fill="#716F64" />
<rect x="855" y="75" width="24" height="1" fill="#D6D3C6" />
<rect x="878" y="52" width="1" height="24" fill="#D6D3C6" />
<rect x="880" y="51" width="26" height="26" fill="#EFEDE4" />
<rect x="880" y="51" width="25" height="1" fill="#FFFFFF" />
<rect x="880" y="51" width="1" height="25" fill="#FFFFFF" />
<rect x="880" y="76" width="26" height="1" fill="#716F64" />
<rect x="905" y="51" width="1" height="26" fill="#716F64" />
<rect x="881" y="75" width="24" height="1" fill="#D6D3C6" />
<rect x="904" y="52" width="1" height="24" fill="#D6D3C6" />
<rect x="906" y="51" width="26" height="26" fill="#EFEDE4" />
<rect x="906" y="51" width="25" height="1" fill="#FFFFFF" />
<rect x="906" y="51" width="1" height="25" fill="#FFFFFF" />
<rect x="906" y="76" width="26" height="1" fill="#716F64" />
<rect x="931" y="51" width="1" height="26" fill="#716F64" />
<rect x="907" y="75" width="24" height="1" fill="#D6D3C6" />
<rect x="930" y="52" width="1" height="24" fill="#D6D3C6" />
<rect x="932" y="51" width="26" height="26" fill="#EFEDE4" />
<rect x="932" y="51" width="25" height="1" fill="#FFFFFF" />
<rect x="932" y="51" width="1" height="25" fill="#FFFFFF" />
<rect x="932" y="76" width="26" height="1" fill="#716F64" />
<rect x="957" y="51" width="1" height="26" fill="#716F64" />
<rect x="933" y="75" width="24" height="1" fill="#D6D3C6" />
<rect x="956" y="52" width="1" height="24" fill="#D6D3C6" />
<rect x="964" y="51" width="26" height="26" fill="#EFEDE4" />
<rect x="964" y="51" width="25" height="1" fill="#FFFFFF" />
<rect x="964" y="51" width="1" height="25" fill="#FFFFFF" />
<rect x="964" y="76" width="26" height="1" fill="#716F64" />
<rect x="989" y="51" width="1" height="26" fill="#716F64" />
<rect x="965" y="75" width="24" height="1" fill="#D6D3C6" />
<rect x="988" y="52" width="1" height="24" fill="#D6D3C6" />
<rect x="990" y="51" width="26" height="26" fill="#EFEDE4" />
<rect x="990" y="51" width="25" height="1" fill="#FFFFFF" />
<rect x="990" y="51" width="1" height="25" fill="#FFFFFF" />
<rect x="990" y="76" width="26" height="1" fill="#716F64" />
<rect x="1015" y="51" width="1" height="26" fill="#716F64" />
<rect x="991" y="75" width="24" height="1" fill="#D6D3C6" />
<rect x="1014" y="52" width="1" height="24" fill="#D6D3C6" />
<rect x="1016" y="51" width="26" height="26" fill="#EFEDE4" />
<rect x="1016" y="51" width="25" height="1" fill="#FFFFFF" />
<rect x="1016" y="51" width="1" height="25" fill="#FFFFFF" />
<rect x="1016" y="76" width="26" height="1" fill="#716F64" />
<rect x="1041" y="51" width="1" height="26" fill="#716F64" />
<rect x="1017" y="75" width="24" height="1" fill="#D6D3C6" />
<rect x="1040" y="52" width="1" height="24" fill="#D6D3C6" />
<rect x="7" y="87" width="119" height="19" fill="#fff" />
<rect x="7" y="87" width="119" height="1" fill="#ACA899" />
<rect x="7" y="87" width="1" height="19" fill="#ACA899" />
<rect x="7" y="105" width="119" height="1" fill="#FFFFFF" />
<rect x="125" y="87" width="1" height="19" fill="#FFFFFF" />
<rect x="8" y="88" width="117" height="1" fill="#716F64" />
<rect x="8" y="88" width="1" height="17" fill="#716F64" />
<rect x="8" y="104" width="117" height="1" fill="#ECE9D8" />
<rect x="124" y="88" width="1" height="17" fill="#ECE9D8" />
<rect x="107" y="88" width="17" height="16" fill="#ECE9D8" />
<rect x="107" y="88" width="16" height="1" fill="#FFFFFF" />
<rect x="107" y="88" width="1" height="15" fill="#FFFFFF" />
<rect x="107" y="103" width="17" height="1" fill="#716F64" />
<rect x="123" y="88" width="1" height="16" fill="#716F64" />
<rect x="108" y="102" width="15" height="1" fill="#ACA899" />
<rect x="122" y="89" width="1" height="14" fill="#ACA899" />
<rect x="133" y="87" width="118" height="19" fill="#fff" />
<rect x="133" y="87" width="118" height="1" fill="#ACA899" />
<rect x="133" y="87" width="1" height="19" fill="#ACA899" />
<rect x="133" y="105" width="118" height="1" fill="#FFFFFF" />
<rect x="250" y="87" width="1" height="19" fill="#FFFFFF" />
<rect x="134" y="88" width="116" height="1" fill="#716F64" />
<rect x="134" y="88" width="1" height="17" fill="#716F64" />
<rect x="134" y="104" width="116" height="1" fill="#ECE9D8" />
<rect x="249" y="88" width="1" height="17" fill="#ECE9D8" />
<rect x="233" y="88" width="17" height="16" fill="#ECE9D8" />
<rect x="233" y="88" width="16" height="1" fill="#FFFFFF" />
<rect x="233" y="88" width="1" height="15" fill="#FFFFFF" />
<rect x="233" y="103" width="17" height="1" fill="#716F64" />
<rect x="249" y="88" width="1" height="16" fill="#716F64" />
<rect x="234" y="102" width="15" height="1" fill="#ACA899" />
<rect x="248" y="89" width="1" height="14" fill="#ACA899" />
<rect x="260" y="85" width="22" height="1" fill="#FFFFFF" />
<rect x="260" y="85" width="1" height="22" fill="#FFFFFF" />
<rect x="260" y="107" width="23" height="1" fill="#716F64" />
<rect x="282" y="85" width="1" height="23" fill="#716F64" />
<rect x="261" y="106" width="21" height="1" fill="#ACA899" />
<rect x="281" y="86" width="1" height="21" fill="#ACA899" />
<rect x="320" y="85" width="22" height="1" fill="#FFFFFF" />
<rect x="320" y="85" width="1" height="22" fill="#FFFFFF" />
<rect x="320" y="107" width="23" height="1" fill="#716F64" />
<rect x="342" y="85" width="1" height="23" fill="#716F64" />
<rect x="321" y="106" width="21" height="1" fill="#ACA899" />
<rect x="341" y="86" width="1" height="21" fill="#ACA899" />
<rect x="343" y="85" width="22" height="1" fill="#FFFFFF" />
<rect x="343" y="85" width="1" height="22" fill="#FFFFFF" />
<rect x="343" y="107" width="23" height="1" fill="#716F64" />
<rect x="365" y="85" width="1" height="23" fill="#716F64" />
<rect x="344" y="106" width="21" height="1" fill="#ACA899" />
<rect x="364" y="86" width="1" height="21" fill="#ACA899" />
<rect x="380" y="85" width="22" height="1" fill="#FFFFFF" />
<rect x="380" y="85" width="1" height="22" fill="#FFFFFF" />
<rect x="380" y="107" width="23" height="1" fill="#716F64" />
<rect x="402" y="85" width="1" height="23" fill="#716F64" />
<rect x="381" y="106" width="21" height="1" fill="#ACA899" />
<rect x="401" y="86" width="1" height="21" fill="#ACA899" />
<rect x="417" y="85" width="22" height="1" fill="#FFFFFF" />
<rect x="417" y="85" width="1" height="22" fill="#FFFFFF" />
<rect x="417" y="107" width="23" height="1" fill="#716F64" />
<rect x="439" y="85" width="1" height="23" fill="#716F64" />
<rect x="418" y="106" width="21" height="1" fill="#ACA899" />
<rect x="438" y="86" width="1" height="21" fill="#ACA899" />
<rect x="447" y="85" width="22" height="1" fill="#FFFFFF" />
<rect x="447" y="85" width="1" height="22" fill="#FFFFFF" />
<rect x="447" y="107" width="23" height="1" fill="#716F64" />
<rect x="469" y="85" width="1" height="23" fill="#716F64" />
<rect x="448" y="106" width="21" height="1" fill="#ACA899" />
<rect x="468" y="86" width="1" height="21" fill="#ACA899" />
<rect x="493" y="85" width="22" height="1" fill="#FFFFFF" />
<rect x="493" y="85" width="1" height="22" fill="#FFFFFF" />
<rect x="493" y="107" width="23" height="1" fill="#716F64" />
<rect x="515" y="85" width="1" height="23" fill="#716F64" />
<rect x="494" y="106" width="21" height="1" fill="#ACA899" />
<rect x="514" y="86" width="1" height="21" fill="#ACA899" />
<rect x="516" y="85" width="22" height="1" fill="#FFFFFF" />
<rect x="516" y="85" width="1" height="22" fill="#FFFFFF" />
<rect x="516" y="107" width="23" height="1" fill="#716F64" />
<rect x="538" y="85" width="1" height="23" fill="#716F64" />
<rect x="517" y="106" width="21" height="1" fill="#ACA899" />
<rect x="537" y="86" width="1" height="21" fill="#ACA899" />
<rect x="545" y="85" width="22" height="1" fill="#FFFFFF" />
<rect x="545" y="85" width="1" height="22" fill="#FFFFFF" />
<rect x="545" y="107" width="23" height="1" fill="#716F64" />
<rect x="567" y="85" width="1" height="23" fill="#716F64" />
<rect x="546" y="106" width="21" height="1" fill="#ACA899" />
<rect x="566" y="86" width="1" height="21" fill="#ACA899" />
<rect x="568" y="85" width="22" height="1" fill="#FFFFFF" />
<rect x="568" y="85" width="1" height="22" fill="#FFFFFF" />
<rect x="568" y="107" width="23" height="1" fill="#716F64" />
<rect x="590" y="85" width="1" height="23" fill="#716F64" />
<rect x="569" y="106" width="21" height="1" fill="#ACA899" />
<rect x="589" y="86" width="1" height="21" fill="#ACA899" />
<rect x="596" y="85" width="22" height="1" fill="#FFFFFF" />
<rect x="596" y="85" width="1" height="22" fill="#FFFFFF" />
<rect x="596" y="107" width="23" height="1" fill="#716F64" />
<rect x="618" y="85" width="1" height="23" fill="#716F64" />
<rect x="597" y="106" width="21" height="1" fill="#ACA899" />
<rect x="617" y="86" width="1" height="21" fill="#ACA899" />
<rect x="619" y="85" width="22" height="1" fill="#FFFFFF" />
<rect x="619" y="85" width="1" height="22" fill="#FFFFFF" />
<rect x="619" y="107" width="23" height="1" fill="#716F64" />
<rect x="641" y="85" width="1" height="23" fill="#716F64" />
<rect x="620" y="106" width="21" height="1" fill="#ACA899" />
<rect x="640" y="86" width="1" height="21" fill="#ACA899" />
<rect x="642" y="85" width="22" height="1" fill="#FFFFFF" />
<rect x="642" y="85" width="1" height="22" fill="#FFFFFF" />
<rect x="642" y="107" width="23" height="1" fill="#716F64" />
<rect x="664" y="85" width="1" height="23" fill="#716F64" />
<rect x="643" y="106" width="21" height="1" fill="#ACA899" />
<rect x="663" y="86" width="1" height="21" fill="#ACA899" />
<rect x="671" y="85" width="22" height="1" fill="#FFFFFF" />
<rect x="671" y="85" width="1" height="22" fill="#FFFFFF" />
<rect x="671" y="107" width="23" height="1" fill="#716F64" />
<rect x="693" y="85" width="1" height="23" fill="#716F64" />
<rect x="672" y="106" width="21" height="1" fill="#ACA899" />
<rect x="692" y="86" width="1" height="21" fill="#ACA899" />
<rect x="694" y="85" width="22" height="1" fill="#FFFFFF" />
<rect x="694" y="85" width="1" height="22" fill="#FFFFFF" />
<rect x="694" y="107" width="23" height="1" fill="#716F64" />
<rect x="716" y="85" width="1" height="23" fill="#716F64" />
<rect x="695" y="106" width="21" height="1" fill="#ACA899" />
<rect x="715" y="86" width="1" height="21" fill="#ACA899" />
<rect x="724" y="85" width="22" height="1" fill="#FFFFFF" />
<rect x="724" y="85" width="1" height="22" fill="#FFFFFF" />
<rect x="724" y="107" width="23" height="1" fill="#716F64" />
<rect x="746" y="85" width="1" height="23" fill="#716F64" />
<rect x="725" y="106" width="21" height="1" fill="#ACA899" />
<rect x="745" y="86" width="1" height="21" fill="#ACA899" />
<rect x="747" y="85" width="22" height="1" fill="#FFFFFF" />
<rect x="747" y="85" width="1" height="22" fill="#FFFFFF" />
<rect x="747" y="107" width="23" height="1" fill="#716F64" />
<rect x="769" y="85" width="1" height="23" fill="#716F64" />
<rect x="748" y="106" width="21" height="1" fill="#ACA899" />
<rect x="768" y="86" width="1" height="21" fill="#ACA899" />
<rect x="775" y="85" width="22" height="1" fill="#FFFFFF" />
<rect x="775" y="85" width="1" height="22" fill="#FFFFFF" />
<rect x="775" y="107" width="23" height="1" fill="#716F64" />
<rect x="797" y="85" width="1" height="23" fill="#716F64" />
<rect x="776" y="106" width="21" height="1" fill="#ACA899" />
<rect x="796" y="86" width="1" height="21" fill="#ACA899" />
<rect x="798" y="85" width="22" height="1" fill="#FFFFFF" />
<rect x="798" y="85" width="1" height="22" fill="#FFFFFF" />
<rect x="798" y="107" width="23" height="1" fill="#716F64" />
<rect x="820" y="85" width="1" height="23" fill="#716F64" />
<rect x="799" y="106" width="21" height="1" fill="#ACA899" />
<rect x="819" y="86" width="1" height="21" fill="#ACA899" />
<rect x="826" y="85" width="22" height="1" fill="#FFFFFF" />
<rect x="826" y="85" width="1" height="22" fill="#FFFFFF" />
<rect x="826" y="107" width="23" height="1" fill="#716F64" />
<rect x="848" y="85" width="1" height="23" fill="#716F64" />
<rect x="827" y="106" width="21" height="1" fill="#ACA899" />
<rect x="847" y="86" width="1" height="21" fill="#ACA899" />
<rect x="855" y="85" width="22" height="1" fill="#FFFFFF" />
<rect x="855" y="85" width="1" height="22" fill="#FFFFFF" />
<rect x="855" y="107" width="23" height="1" fill="#716F64" />
<rect x="877" y="85" width="1" height="23" fill="#716F64" />
<rect x="856" y="106" width="21" height="1" fill="#ACA899" />
<rect x="876" y="86" width="1" height="21" fill="#ACA899" />
<rect x="878" y="85" width="22" height="1" fill="#FFFFFF" />
<rect x="878" y="85" width="1" height="22" fill="#FFFFFF" />
<rect x="878" y="107" width="23" height="1" fill="#716F64" />
<rect x="900" y="85" width="1" height="23" fill="#716F64" />
<rect x="879" y="106" width="21" height="1" fill="#ACA899" />
<rect x="899" y="86" width="1" height="21" fill="#ACA899" />
<rect x="901" y="85" width="22" height="1" fill="#FFFFFF" />
<rect x="901" y="85" width="1" height="22" fill="#FFFFFF" />
<rect x="901" y="107" width="23" height="1" fill="#716F64" />
<rect x="923" y="85" width="1" height="23" fill="#716F64" />
<rect x="902" y="106" width="21" height="1" fill="#ACA899" />
<rect x="922" y="86" width="1" height="21" fill="#ACA899" />
<rect x="930" y="85" width="22" height="1" fill="#FFFFFF" />
<rect x="930" y="85" width="1" height="22" fill="#FFFFFF" />
<rect x="930" y="107" width="23" height="1" fill="#716F64" />
<rect x="952" y="85" width="1" height="23" fill="#716F64" />
<rect x="931" y="106" width="21" height="1" fill="#ACA899" />
<rect x="951" y="86" width="1" height="21" fill="#ACA899" />
<path d="M14.5 54.5h7l3 3v9.5h-10z" fill="#fff" stroke="#000" stroke-width="1.2"/>
<path d="M35.5 57.5h4l1 1h6v8.5h-11z" fill="#FFFF99" stroke="#000" stroke-width="1.1"/><path d="M35.5 67h11l4-6h-11z" fill="#808000" stroke="#000" stroke-width="1.1"/><path d="M43 56q3-3 6 0" stroke="#000" fill="none" stroke-width="1.2"/><path d="M48 55l1.5 2-2.5 .5z" fill="#000"/>
<rect x="58.5" y="54.5" width="13" height="13" fill="#808000" stroke="#000" stroke-width="1.2"/><rect x="61" y="55" width="8" height="6" fill="#E8E8D8"/><rect x="61" y="63" width="8" height="4" fill="#000"/><rect x="66" y="64" width="2" height="2.5" fill="#fff"/>
<path d="M89.5 54.5h10l-2 5h-10z" fill="#fff" stroke="#000"/><rect x="86.5" y="59.5" width="15" height="5" rx="1.5" fill="#E0E0E0" stroke="#000" stroke-width="1.2"/><rect x="87.5" y="64.5" width="13" height="3" fill="#C8C8C8" stroke="#000"/><path d="M89 62h9" stroke="#fff"/>
<path d="M120 54l4 8M127 54l-4 8" stroke="#000" stroke-width="1.2"/><circle cx="121" cy="65" r="2.2" fill="none" stroke="#000080" stroke-width="1.5"/><circle cx="126.5" cy="65" r="2.2" fill="none" stroke="#000080" stroke-width="1.5"/>
<path d="M139.5 54.5h6l2 2v7h-8z" fill="#fff" stroke="#000" stroke-width="1.2"/><path d="M141 57h4M141 59h4M141 61h4" stroke="#000"/><path d="M145.5 58.5h6l2 2v7h-8z" fill="#fff" stroke="#000080" stroke-width="1.3"/><path d="M147 61h5M147 63h5M147 65h5" stroke="#000080"/>
<rect x="162.5" y="55.5" width="11" height="12" rx="1" fill="#B4B2A4" stroke="#A09E90"/><rect x="165" y="54" width="6" height="3" fill="#A09E90"/><rect x="168.5" y="61.5" width="8" height="6" fill="#E8E6DA" stroke="#A09E90"/><path d="M170 64h5" stroke="#A09E90"/>
<path d="M188 62q5-6 10 0" stroke="#A7A595" stroke-width="1.8" fill="none"/><path d="M186 59l1 4.5 4-1z" fill="#A7A595"/>
<path d="M210 62q5-6 10 0" stroke="#A7A595" stroke-width="1.8" fill="none"/><path d="M222 59l-1 4.5-4-1z" fill="#A7A595"/>
<circle cx="243.5" cy="61" r="6.8" fill="#fff" stroke="#000080" stroke-width="1.5"/>
<rect x="239" y="57" width="3" height="10" rx="1" fill="#E020E0"/><rect x="242" y="59" width="3" height="7" fill="#F0E020"/><rect x="245" y="58" width="2" height="7" fill="#20C040"/><rect x="241" y="56" width="3" height="2" fill="#000"/>
<path d="M248.5 66l3.2 3.2" stroke="#000" stroke-width="2.2"/>
<circle cx="266.5" cy="61" r="6.8" fill="#fff" stroke="#000080" stroke-width="1.5"/>
<path d="M262 56l4 3-2 6-3-2z" fill="#E02020"/><path d="M266 59l3 2-1 4-3-1z" fill="#008080"/><path d="M262 63l3 2-2 3z" fill="#802080"/>
<path d="M271.5 66l3.2 3.2" stroke="#000" stroke-width="2.2"/>
<circle cx="289.5" cy="61" r="6.8" fill="#fff" stroke="#000080" stroke-width="1.5"/>
<text x="289.5" y="60.5" font-family="Liberation Sans" font-weight="bold" font-size="6.5" text-anchor="middle" fill="#000020" textLength="9" lengthAdjust="spacingAndGlyphs">ABC</text><text x="289.5" y="66.5" font-family="Liberation Sans" font-weight="bold" font-size="6.5" text-anchor="middle" fill="#000020" textLength="9" lengthAdjust="spacingAndGlyphs">123</text>
<path d="M294.5 66l3.2 3.2" stroke="#000" stroke-width="2.2"/>
<rect x="314.5" y="61.5" width="9" height="6" fill="#fff" stroke="#800000" stroke-width="1.3"/><rect x="315" y="62" width="4" height="5" fill="#800000"/><path d="M320 60l6-6 2 2-6 6z" fill="#E02020" stroke="#800" stroke-width=".6"/><path d="M312 58l-1 1 1 1M326 61l1 1-1 1" stroke="#D02020" fill="none"/>
<rect x="337.5" y="61.5" width="9" height="6" fill="#fff" stroke="#800000" stroke-width="1.3"/><rect x="338" y="62" width="4" height="5" fill="#800000"/><path d="M342 55v5M339 58l3-3 3 3" stroke="#800000" fill="none" stroke-width="1.2"/><circle cx="349" cy="57" r="2.2" fill="#F0F060"/><path d="M335 56h2M336 55v2" stroke="#2030C0"/>
<circle cx="370.5" cy="61" r="6.8" fill="#fff" stroke="#000080" stroke-width="1.5"/>
<rect x="366" y="58" width="9" height="5" fill="#800000"/><rect x="370" y="58" width="5" height="5" fill="#F0D0C0"/>
<path d="M375.5 66l3.2 3.2" stroke="#000" stroke-width="2.2"/>
<circle cx="393.5" cy="61" r="6.8" fill="#fff" stroke="#000080" stroke-width="1.5"/>
<rect x="389" y="59" width="9" height="5" fill="#800000"/><rect x="393" y="59" width="5" height="5" fill="#F0D0C0"/><rect x="391" y="56" width="5" height="3" fill="#800000"/>
<path d="M398.5 66l3.2 3.2" stroke="#000" stroke-width="2.2"/>
<rect x="415.5" y="54.5" width="13" height="9" fill="#fff" stroke="#000080" stroke-width="1.3"/><path d="M417 59h5l3-3" stroke="#000080" fill="none"/><rect x="421.5" y="62.5" width="9" height="6" fill="#F0D0C0" stroke="#000"/><rect x="422" y="63" width="4" height="5" fill="#800000"/>
<circle cx="445.5" cy="61" r="6.8" fill="#fff" stroke="#000080" stroke-width="1.5"/>
<rect x="441.5" y="56.5" width="5" height="5" fill="none" stroke="#000"/><rect x="443.5" y="58.5" width="5" height="5" fill="none" stroke="#800000"/><path d="M441 64l4-3" stroke="#E02020"/>
<path d="M450.5 66l3.2 3.2" stroke="#000" stroke-width="2.2"/>
<g stroke="#A7A595" fill="none" stroke-width="1" transform="translate(472 51)"><path d="M4.5 8.5h6M15.5 8.5h6M10.5 3.5v10M15.5 3.5v10"/></g>
<text x="484.5" y="73" font-family="Liberation Sans" font-size="10.2" text-anchor="middle" fill="#9A988B" textLength="12" lengthAdjust="spacingAndGlyphs">F5</text>
<g stroke="#A7A595" fill="none" stroke-width="1" transform="translate(498 51)"><path d="M6.5 3.5v5h4M10.5 3.5v10M15.5 3.5v10M15.5 8.5h4v-5"/></g>
<text x="510.5" y="73" font-family="Liberation Sans" font-size="10.2" text-anchor="middle" fill="#9A988B" textLength="16.5" lengthAdjust="spacingAndGlyphs">sF5</text>
<g stroke="#A7A595" fill="none" stroke-width="1" transform="translate(524 51)"><path d="M4.5 8.5h6M15.5 8.5h6M10.5 3.5v10M15.5 3.5v10M9 12l8-7"/></g>
<text x="536.5" y="73" font-family="Liberation Sans" font-size="10.2" text-anchor="middle" fill="#9A988B" textLength="12" lengthAdjust="spacingAndGlyphs">F6</text>
<g stroke="#A7A595" fill="none" stroke-width="1" transform="translate(550 51)"><path d="M6.5 3.5v5h4M10.5 3.5v10M15.5 3.5v10M15.5 8.5h4v-5M9 12l8-7"/></g>
<text x="562.5" y="73" font-family="Liberation Sans" font-size="10.2" text-anchor="middle" fill="#9A988B" textLength="16.5" lengthAdjust="spacingAndGlyphs">sF6</text>
<g stroke="#A7A595" fill="none" stroke-width="1" transform="translate(576 51)"><path d="M4.5 8.5h5M16.5 8.5h5M13 4.5a4 4 0 1 0 0.01 0"/></g>
<text x="588.5" y="73" font-family="Liberation Sans" font-size="10.2" text-anchor="middle" fill="#9A988B" textLength="12" lengthAdjust="spacingAndGlyphs">F7</text>
<g stroke="#A7A595" fill="none" stroke-width="1" transform="translate(602 51)"><path d="M4.5 8.5h4M17.5 8.5h4M10.5 3.5h-2v10h2M15.5 3.5h2v10h-2"/></g>
<text x="614.5" y="73" font-family="Liberation Sans" font-size="10.2" text-anchor="middle" fill="#9A988B" textLength="12" lengthAdjust="spacingAndGlyphs">F8</text>
<g stroke="#A7A595" fill="none" stroke-width="1" transform="translate(634 51)"><path d="M4.5 7.5h17"/></g>
<text x="646.5" y="73" font-family="Liberation Sans" font-size="10.2" text-anchor="middle" fill="#9A988B" textLength="12" lengthAdjust="spacingAndGlyphs">F9</text>
<g stroke="#A7A595" fill="none" stroke-width="1" transform="translate(660 51)"><path d="M12.5 2.5v10"/></g>
<text x="672.5" y="73" font-family="Liberation Sans" font-size="10.2" text-anchor="middle" fill="#9A988B" textLength="16.5" lengthAdjust="spacingAndGlyphs">sF9</text>
<g stroke="#A7A595" fill="none" stroke-width="1" transform="translate(686 51)"><path d="M4.5 7.5h17M8.5 4l9 7.5M17.5 4l-9 7.5"/></g>
<text x="698.5" y="73" font-family="Liberation Sans" font-size="10.2" text-anchor="middle" fill="#9A988B" textLength="16.5" lengthAdjust="spacingAndGlyphs">cF9</text>
<g stroke="#A7A595" fill="none" stroke-width="1" transform="translate(712 51)"><path d="M12.5 3.5v9M8.5 4l9 7.5M17.5 4l-9 7.5"/></g>
<text x="724.5" y="73" font-family="Liberation Sans" font-size="10.2" text-anchor="middle" fill="#9A988B" textLength="21" lengthAdjust="spacingAndGlyphs">cF10</text>
<g stroke="#A7A595" fill="none" stroke-width="1" transform="translate(744 51)"><path d="M4.5 8.5h5M16.5 8.5h5M9.5 3.5v10M16.5 3.5v10M13 13v-9M11 6l2-2 2 2"/></g>
<text x="756.5" y="73" font-family="Liberation Sans" font-size="10.2" text-anchor="middle" fill="#9A988B" textLength="16.5" lengthAdjust="spacingAndGlyphs">sF7</text>
<g stroke="#A7A595" fill="none" stroke-width="1" transform="translate(770 51)"><path d="M4.5 8.5h5M16.5 8.5h5M9.5 3.5v10M16.5 3.5v10M13 4v9M11 11l2 2 2-2"/></g>
<text x="782.5" y="73" font-family="Liberation Sans" font-size="10.2" text-anchor="middle" fill="#9A988B" textLength="16.5" lengthAdjust="spacingAndGlyphs">sF8</text>
<g stroke="#A7A595" fill="none" stroke-width="1" transform="translate(796 51)"><path d="M6.5 3.5v5h3M9.5 3.5v10M16.5 3.5v10M16.5 8.5h3v-5M13 13v-9M11 6l2-2 2 2"/></g>
<text x="808.5" y="73" font-family="Liberation Sans" font-size="10.2" text-anchor="middle" fill="#9A988B" textLength="16.5" lengthAdjust="spacingAndGlyphs">aF7</text>
<g stroke="#A7A595" fill="none" stroke-width="1" transform="translate(822 51)"><path d="M6.5 3.5v5h3M9.5 3.5v10M16.5 3.5v10M16.5 8.5h3v-5M13 4v9M11 11l2 2 2-2"/></g>
<text x="834.5" y="73" font-family="Liberation Sans" font-size="10.2" text-anchor="middle" fill="#9A988B" textLength="16.5" lengthAdjust="spacingAndGlyphs">aF8</text>
<g stroke="#A7A595" fill="none" stroke-width="1" transform="translate(854 51)"><path d="M4.5 8.5h5M16.5 8.5h5M9.5 3.5v10M16.5 3.5v10M13 13v-9M11 6l2-2 2 2"/></g>
<text x="866.5" y="73" font-family="Liberation Sans" font-size="10.2" text-anchor="middle" fill="#9A988B" textLength="21" lengthAdjust="spacingAndGlyphs">saF5</text>
<g stroke="#A7A595" fill="none" stroke-width="1" transform="translate(880 51)"><path d="M4.5 8.5h5M16.5 8.5h5M9.5 3.5v10M16.5 3.5v10M13 4v9M11 11l2 2 2-2"/></g>
<text x="892.5" y="73" font-family="Liberation Sans" font-size="10.2" text-anchor="middle" fill="#9A988B" textLength="21" lengthAdjust="spacingAndGlyphs">saF6</text>
<g stroke="#A7A595" fill="none" stroke-width="1" transform="translate(906 51)"><path d="M6.5 3.5v5h3M9.5 3.5v10M16.5 3.5v10M16.5 8.5h3v-5M13 13v-9M11 6l2-2 2 2"/></g>
<text x="918.5" y="73" font-family="Liberation Sans" font-size="10.2" text-anchor="middle" fill="#9A988B" textLength="21" lengthAdjust="spacingAndGlyphs">saF7</text>
<g stroke="#A7A595" fill="none" stroke-width="1" transform="translate(932 51)"><path d="M6.5 3.5v5h3M9.5 3.5v10M16.5 3.5v10M16.5 8.5h3v-5M13 4v9M11 11l2 2 2-2"/></g>
<text x="944.5" y="73" font-family="Liberation Sans" font-size="10.2" text-anchor="middle" fill="#9A988B" textLength="21" lengthAdjust="spacingAndGlyphs">saF8</text>
<g stroke="#A7A595" fill="none" stroke-width="1" transform="translate(964 51)"><path d="M13 13v-10M10 6l3-3 3 3"/></g>
<text x="976.5" y="73" font-family="Liberation Sans" font-size="10.2" text-anchor="middle" fill="#9A988B" textLength="16.5" lengthAdjust="spacingAndGlyphs">aF5</text>
<g stroke="#A7A595" fill="none" stroke-width="1" transform="translate(990 51)"><path d="M13 3v10M10 10l3 3 3-3"/></g>
<text x="1002.5" y="73" font-family="Liberation Sans" font-size="10.2" text-anchor="middle" fill="#9A988B" textLength="21" lengthAdjust="spacingAndGlyphs">caF5</text>
<g stroke="#A7A595" fill="none" stroke-width="1" transform="translate(1016 51)"><path d="M4.5 8.5h5M16.5 8.5h5M9.5 3.5v10M16.5 3.5v10M13 13v-9M11 6l2-2 2 2"/></g>
<text x="1028.5" y="73" font-family="Liberation Sans" font-size="10.2" text-anchor="middle" fill="#9A988B" textLength="12" lengthAdjust="spacingAndGlyphs">ca</text>
<rect x="227" y="48" width="1" height="28" fill="#ACA899" />
<rect x="228" y="48" width="1" height="28" fill="#FFFFFF" />
<rect x="312" y="83" width="1" height="25" fill="#ACA899" />
<rect x="313" y="83" width="1" height="25" fill="#FFFFFF" />
<rect x="372" y="83" width="1" height="25" fill="#ACA899" />
<rect x="373" y="83" width="1" height="25" fill="#FFFFFF" />
<rect x="409" y="83" width="1" height="25" fill="#ACA899" />
<rect x="410" y="83" width="1" height="25" fill="#FFFFFF" />
<rect x="464" y="47" width="1" height="30" fill="#ACA899" />
<rect x="466" y="47" width="1" height="30" fill="#FFFFFF" />
<rect x="0" y="48" width="1" height="28" fill="#ACA899" />
<rect x="1" y="48" width="1" height="28" fill="#FFFFFF" />
<rect x="0" y="82" width="1" height="26" fill="#ACA899" />
<rect x="1" y="82" width="1" height="26" fill="#FFFFFF" />
<rect x="960" y="81" width="1" height="27" fill="#ACA899" />
<rect x="961" y="81" width="1" height="27" fill="#FFFFFF" />
<rect x="283" y="85" width="23" height="23" fill="#F5F4EE" />
<rect x="283" y="85" width="23" height="1" fill="#716F64" />
<rect x="283" y="85" width="1" height="23" fill="#716F64" />
<rect x="284" y="86" width="22" height="1" fill="#ACA899" />
<rect x="284" y="86" width="1" height="22" fill="#ACA899" />
<rect x="283" y="107" width="23" height="1" fill="#FFFFFF" />
<rect x="305" y="85" width="1" height="23" fill="#FFFFFF" />
<rect x="470" y="85" width="23" height="23" fill="#F5F4EE" />
<rect x="470" y="85" width="23" height="1" fill="#716F64" />
<rect x="470" y="85" width="1" height="23" fill="#716F64" />
<rect x="471" y="86" width="22" height="1" fill="#ACA899" />
<rect x="471" y="86" width="1" height="22" fill="#ACA899" />
<rect x="470" y="107" width="23" height="1" fill="#FFFFFF" />
<rect x="492" y="85" width="1" height="23" fill="#FFFFFF" />
<path d="M265.5 90.5h10v12h-10z" fill="#fff" stroke="#000" stroke-width="1.2"/><circle cx="274" cy="92.5" r="3.8" fill="none" stroke="#000080" stroke-width="1.2" stroke-dasharray="2 1"/><path d="M276 96l3 3" stroke="#000080" stroke-width="1.3"/>
<path d="M289.5 88v16" stroke="#000080" stroke-dasharray="1 1"/><rect x="287" y="93" width="5" height="3" rx="1" fill="#fff" stroke="#000080"/><rect x="293" y="93" width="5" height="3" fill="#E020C0"/><path d="M297.5 96v7" stroke="#000080"/><rect x="297" y="97" width="5" height="3" fill="#000080"/><rect x="297" y="101" width="5" height="3" fill="#000080"/>
<g stroke="#fff" fill="none" stroke-width="1.3" transform="translate(1 1)"><path d="M327.5 90.5h3v3h-3zM333.5 90.5h3v3h-3zM330.5 93.5h3v3h-3zM331.5 97v2M329.5 99.5h4v3h-4z"/></g>
<g stroke="#9A988A" fill="none" stroke-width="1.3"><path d="M327.5 90.5h3v3h-3zM333.5 90.5h3v3h-3zM330.5 93.5h3v3h-3zM331.5 97v2M329.5 99.5h4v3h-4z"/></g>
<g stroke="#fff" fill="none" stroke-width="1.3" transform="translate(1 1)"><path d="M347.5 89.5h6v8h-6zM349 92h3M349 94h3M355 96l5-6M350 101h12v3h-12z"/></g>
<g stroke="#9A988A" fill="none" stroke-width="1.3"><path d="M347.5 89.5h6v8h-6zM349 92h3M349 94h3M355 96l5-6M350 101h12v3h-12z"/></g>
<g stroke="#fff" fill="none" stroke-width="1.3" transform="translate(1 1)"><path d="M387.5 90.5h4v4h-4zM393.5 89.5h5v13h-5zM389.5 95v6h4M395 92h2M395 95h2M395 98h2"/></g>
<g stroke="#9A988A" fill="none" stroke-width="1.3"><path d="M387.5 90.5h4v4h-4zM393.5 89.5h5v13h-5zM389.5 95v6h4M395 92h2M395 95h2M395 98h2"/></g>
<g stroke="#fff" fill="none" stroke-width="1.3" transform="translate(1 1)"><path d="M421.5 89.5h8v5h-8zM423 92h2M427 92h2M430 91q3 1 2 4M426 97v3h2"/><rect x="429" y="96" width="8" height="6" fill="#A7A595" stroke="none"/></g>
<g stroke="#9A988A" fill="none" stroke-width="1.3"><path d="M421.5 89.5h8v5h-8zM423 92h2M427 92h2M430 91q3 1 2 4M426 97v3h2"/><rect x="429" y="96" width="8" height="6" fill="#A7A595" stroke="none"/></g>
<g stroke="#000080" fill="none" stroke-width="1.2"><path d="M450 92h13M453 90v4M456 90v4M459 92h4M450 97h13M453 95v4M456 95v4M457 97v5h6M463 92h3M463 97h3M463 102h3"/></g>
<g stroke="#000080" fill="none" stroke-width="1.2"><path d="M473 93h8M476 91v4M479 91v4M473 98h13M476 96v4M479 96v4M480 98v5h6M486 98h2M486 103h2"/></g>
<path d="M481 94l7-5 2 2-7 5z" fill="#E02020"/><path d="M480 95l1 1" stroke="#D0A000" stroke-width="1.5"/>
<circle cx="504" cy="93.5" r="5.5" fill="#fff" stroke="#000080" stroke-width="1.2"/><path d="M502 91h4M502 93h4M502 95h4" stroke="#000080"/><path d="M508 98l4 4" stroke="#000080" stroke-width="1.2"/><rect x="496" y="97" width="8" height="6" fill="#fff" stroke="#000"/><rect x="496" y="97" width="3" height="6" fill="#000"/><rect x="499" y="98" width="3" height="4" fill="#E020E0"/>
<g stroke="#fff" fill="none" stroke-width="1.3" transform="translate(1 1)"><circle cx="527" cy="94" r="5"/><path d="M528 95l6-6M527 100l5 4"/><rect x="519.5" y="98.5" width="5" height="5"/></g>
<g stroke="#9A988A" fill="none" stroke-width="1.3"><circle cx="527" cy="94" r="5"/><path d="M528 95l6-6M527 100l5 4"/><rect x="519.5" y="98.5" width="5" height="5"/></g>
<g stroke="#fff" fill="none" stroke-width="1.3" transform="translate(1 1)"><path d="M549.5 90.5h12q2.5 0 2.5 3v2h-4v-2h-9v2h-4v-2q0-3 2.5-3zM552.5 96.5h7v7h-7zM554 99h4M554 101h4"/></g>
<g stroke="#9A988A" fill="none" stroke-width="1.3"><path d="M549.5 90.5h12q2.5 0 2.5 3v2h-4v-2h-9v2h-4v-2q0-3 2.5-3zM552.5 96.5h7v7h-7zM554 99h4M554 101h4"/></g>
<path d="M551 91h10q2 0 2 2h-14q0-2 2-2z" fill="#A8A698"/><rect x="553" y="97" width="6" height="6" fill="#A8A698"/>
<g stroke="#fff" fill="none" stroke-width="1.3" transform="translate(1 1)"><path d="M571.5 89.5h14M574 92l9 9M583 92l-9 9M572.5 103.5h13"/></g>
<g stroke="#9A988A" fill="none" stroke-width="1.3"><path d="M571.5 89.5h14M574 92l9 9M583 92l-9 9M572.5 103.5h13"/></g>
<path d="M574 90h10l-5 6z M574 103h10l-5-6z" fill="#A8A698"/><path d="M576 92h2M580 92h2" stroke="#fff"/>
<path d="M599 91h4M601 89v4M604 91h3M604 89v4" stroke="#000"/><path d="M603 90h9l-5 8" stroke="#E01010" stroke-width="2.2" fill="none"/><g fill="#000"><rect x="599" y="97" width="2" height="2"/><rect x="603" y="97" width="2" height="2"/><rect x="607" y="97" width="2" height="2"/><rect x="611" y="97" width="2" height="2"/><rect x="601" y="99" width="2" height="2"/><rect x="605" y="99" width="2" height="2"/><rect x="609" y="99" width="2" height="2"/><rect x="599" y="101" width="2" height="2"/><rect x="603" y="101" width="2" height="2"/><rect x="607" y="101" width="2" height="2"/><rect x="611" y="101" width="2" height="2"/></g><path d="M605 96l1 2" stroke="#D0A000" stroke-width="1.4"/>
<g stroke="#fff" fill="none" stroke-width="1.3" transform="translate(1 1)"><path d="M622.5 89v15M622.5 100.5h14M625 98v4M628 98v4M632 93l6-5"/></g>
<g stroke="#9A988A" fill="none" stroke-width="1.3"><path d="M622.5 89v15M622.5 100.5h14M625 98v4M628 98v4M632 93l6-5"/></g>
<g fill="#A8A698"><rect x="624" y="90" width="1.5" height="1.5"/><rect x="625" y="92" width="1.5" height="1.5"/><rect x="624" y="94" width="1.5" height="1.5"/><rect x="625" y="96" width="1.5" height="1.5"/><rect x="627" y="90" width="1.5" height="1.5"/><rect x="628" y="92" width="1.5" height="1.5"/><rect x="627" y="94" width="1.5" height="1.5"/><rect x="628" y="96" width="1.5" height="1.5"/><rect x="630" y="90" width="1.5" height="1.5"/><rect x="631" y="92" width="1.5" height="1.5"/><rect x="630" y="94" width="1.5" height="1.5"/><rect x="631" y="96" width="1.5" height="1.5"/><rect x="633" y="90" width="1.5" height="1.5"/><rect x="634" y="92" width="1.5" height="1.5"/><rect x="633" y="94" width="1.5" height="1.5"/><rect x="634" y="96" width="1.5" height="1.5"/></g><path d="M630 96l7-7 2 2-7 7z" fill="#A8A698"/>
<g stroke="#fff" fill="none" stroke-width="1.3" transform="translate(1 1)"><path d="M645 100.5h3M650 99l-2 2 2 2M655 99l2 2-2 2M658 98v6"/></g>
<g stroke="#9A988A" fill="none" stroke-width="1.3"><path d="M645 100.5h3M650 99l-2 2 2 2M655 99l2 2-2 2M658 98v6"/></g>
<g fill="#A8A698"><rect x="646" y="89" width="1.5" height="1.5"/><rect x="647" y="91" width="1.5" height="1.5"/><rect x="646" y="93" width="1.5" height="1.5"/><rect x="649" y="89" width="1.5" height="1.5"/><rect x="650" y="91" width="1.5" height="1.5"/><rect x="649" y="93" width="1.5" height="1.5"/><rect x="652" y="89" width="1.5" height="1.5"/><rect x="653" y="91" width="1.5" height="1.5"/><rect x="652" y="93" width="1.5" height="1.5"/></g><path d="M652 96l7-7 2 2-7 7z" fill="#A8A698"/>
<g stroke="#fff" fill="none" stroke-width="1.3" transform="translate(1 1)"><path d="M674.5 89.5h6v6h-6zM674.5 97.5h6v6h-6zM677.5 89v15M674 92.5h6M674 100.5h6M683.5 89.5h6v14h-6zM683 93.5h6M686.5 93v11M683 97.5h6"/></g>
<g stroke="#9A988A" fill="none" stroke-width="1.3"><path d="M674.5 89.5h6v6h-6zM674.5 97.5h6v6h-6zM677.5 89v15M674 92.5h6M674 100.5h6M683.5 89.5h6v14h-6zM683 93.5h6M686.5 93v11M683 97.5h6"/></g>
<circle cx="704" cy="95" r="6.2" fill="#fff" stroke="#000080" stroke-width="1.6"/><path d="M701 92h5M703 90v4M700 96l2 2 2-2M706 96l2 2" stroke="#000" fill="none" stroke-width=".9"/><path d="M708.5 99.5l3.5 3.5" stroke="#000" stroke-width="2"/>
<rect x="729" y="88" width="9" height="4" fill="#F0E040" stroke="#806000" stroke-width=".8"/><rect x="733" y="89" width="7" height="3" fill="#F0E040" stroke="#806000" stroke-width=".6"/><path d="M732 92v5" stroke="#803000" stroke-width="2"/><rect x="728" y="97" width="10" height="3" fill="#D02080"/><rect x="727" y="100" width="12" height="3" fill="#40C0F0" stroke="#2040A0" stroke-width=".6"/>
<g fill="#A8A698"><rect x="752" y="89" width="13" height="3"/><rect x="752" y="101" width="13" height="3"/><rect x="755" y="93" width="7" height="7"/></g><path d="M758.5 94v4M756.5 96l2 2 2-2" stroke="#fff" fill="none"/>
<g fill="#fff" stroke="#000080" stroke-width="1.3"><rect x="784.5" y="89.5" width="10" height="9"/><rect x="778.5" y="95.5" width="8" height="8"/></g><path d="M783 99l4-4M785 95h2v2" stroke="#000" fill="none"/>
<g fill="#fff" stroke="#000080" stroke-width="1.3"><rect x="810.5" y="89.5" width="6" height="6"/><rect x="801.5" y="93.5" width="11" height="10"/></g><path d="M805 100l4-4M807 96h2v2" stroke="#000" fill="none"/>
<circle cx="836" cy="94.5" r="6.2" fill="#fff" stroke="#000080" stroke-width="1.6"/><rect x="832" y="94" width="7" height="4" fill="#F0F040" stroke="#606000" stroke-width=".6"/><path d="M833 91h5M835.5 90v4" stroke="#000" stroke-width=".8"/><path d="M840.5 99l3.5 3.5" stroke="#000" stroke-width="2"/>
<g stroke="#fff" fill="none" stroke-width="1.3" transform="translate(1 1)"><path d="M861.5 88v16M859 90.5h5v3h-5zM859 95.5h5v3h-5zM859 100.5h5v3h-5zM868.5 90v12M866 99l2.5 3 2.5-3M866 93l2.5-3 2.5 3"/></g>
<g stroke="#9A988A" fill="none" stroke-width="1.3"><path d="M861.5 88v16M859 90.5h5v3h-5zM859 95.5h5v3h-5zM859 100.5h5v3h-5zM868.5 90v12M866 99l2.5 3 2.5-3M866 93l2.5-3 2.5 3"/></g>
<g stroke="#fff" fill="none" stroke-width="1.3" transform="translate(1 1)"><path d="M884.5 88v16M882 90.5h5v3h-5zM882 95.5h5v3h-5zM882 100.5h5v3h-5zM891.5 92v10M889 103.5h5M889 91.5h5M889 99l2.5 3 2.5-3"/></g>
<g stroke="#9A988A" fill="none" stroke-width="1.3"><path d="M884.5 88v16M882 90.5h5v3h-5zM882 95.5h5v3h-5zM882 100.5h5v3h-5zM891.5 92v10M889 103.5h5M889 91.5h5M889 99l2.5 3 2.5-3"/></g>
<g stroke="#fff" fill="none" stroke-width="1.3" transform="translate(1 1)"><path d="M907.5 88v16M905 90.5h5v3h-5zM905 95.5h5v3h-5zM905 100.5h5v3h-5zM911 91h3q2 0 2 3v2h-3v6M911 99l2.5 3 2.5-3"/></g>
<g stroke="#9A988A" fill="none" stroke-width="1.3"><path d="M907.5 88v16M905 90.5h5v3h-5zM905 95.5h5v3h-5zM905 100.5h5v3h-5zM911 91h3q2 0 2 3v2h-3v6M911 99l2.5 3 2.5-3"/></g>
<rect x="934.5" y="90.5" width="14" height="10" fill="#fff" stroke="#000080" stroke-width="2"/><rect x="937" y="93" width="9" height="5" fill="#000080"/><path d="M939 94v3M941.5 94v3M944 94v3" stroke="#fff"/>
<path fill="#000" d="M13 90h1v1h-1zM15 90h5v1h-5zM10 91h3v1h-3zM15 91h1v1h-1zM19 91h1v1h-1zM12 92h1v1h-1zM15 92h1v1h-1zM19 92h1v1h-1zM10 93h4v1h-4zM15 93h5v1h-5zM12 94h1v1h-1zM12 95h2v1h-2zM15 95h5v1h-5zM11 96h2v1h-2zM14 96h1v1h-1zM17 96h1v1h-1zM11 97h2v1h-2zM15 97h5v1h-5zM10 98h1v1h-1zM12 98h1v1h-1zM17 98h1v1h-1zM12 99h1v1h-1zM17 99h1v1h-1zM12 100h1v1h-1zM14 100h7v1h-7zM27 90h1v1h-1zM23 91h10v1h-10zM23 92h1v1h-1zM23 93h1v1h-1zM25 93h6v1h-6zM23 94h1v1h-1zM27 94h1v1h-1zM29 94h1v1h-1zM23 95h1v1h-1zM28 95h1v1h-1zM23 96h10v1h-10zM23 97h1v1h-1zM28 97h1v1h-1zM31 97h1v1h-1zM23 98h1v1h-1zM28 98h1v1h-1zM22 99h1v1h-1zM28 99h1v1h-1zM22 100h1v1h-1zM26 100h3v1h-3z"/>
<path d="M111 94h7v1h-1v1h-1v1h-1v1h-1v-1h-1v-1h-1v-1h-1z" fill="#000"/>
<path d="M237 94h7v1h-1v1h-1v1h-1v1h-1v-1h-1v-1h-1v-1h-1z" fill="#000"/>
<rect x="4" y="117" width="109" height="1" fill="#FFFFFF" />
<rect x="4" y="119" width="109" height="1" fill="#ACA899" />
<rect x="4" y="117" width="1" height="3" fill="#FFFFFF" />
<rect x="112" y="117" width="1" height="3" fill="#ACA899" />
<rect x="4" y="121" width="109" height="1" fill="#FFFFFF" />
<rect x="4" y="123" width="109" height="1" fill="#ACA899" />
<rect x="4" y="121" width="1" height="3" fill="#FFFFFF" />
<rect x="112" y="121" width="1" height="3" fill="#ACA899" />
<rect x="120" y="115" width="12" height="12" fill="#ECE9D8" />
<rect x="120" y="115" width="11" height="1" fill="#FFFFFF" />
<rect x="120" y="115" width="1" height="11" fill="#FFFFFF" />
<rect x="120" y="126" width="12" height="1" fill="#716F64" />
<rect x="131" y="115" width="1" height="12" fill="#716F64" />
<rect x="121" y="125" width="10" height="1" fill="#ACA899" />
<rect x="130" y="116" width="1" height="10" fill="#ACA899" />
<path d="M123 118l6 6M129 118l-6 6" stroke="#000" stroke-width="1.6"/>
<rect x="5" y="134" width="128" height="558" fill="#fff" />
<rect x="5" y="134" width="128" height="1" fill="#ACA899" />
<rect x="5" y="134" width="1" height="558" fill="#ACA899" />
<rect x="6" y="135" width="126" height="1" fill="#716F64" />
<rect x="6" y="135" width="1" height="556" fill="#716F64" />
<rect x="5" y="691" width="128" height="1" fill="#716F64" />
<rect x="132" y="134" width="1" height="558" fill="#716F64" />
<rect x="7" y="687" width="125" height="4" fill="#F1EFE2" />
<rect x="130" y="136" width="2" height="555" fill="#F1EFE2" />
<rect x="137" y="108" width="1" height="608" fill="#FFFFFF" />
<rect x="141" y="108" width="1" height="608" fill="#ACA899" />
<rect x="5" y="691" width="50" height="19" fill="#ECE9D8" />
<rect x="6" y="710" width="48" height="1" fill="#716F64" />
<rect x="7" y="709" width="48" height="1" fill="#ACA899" />
<rect x="55" y="691" width="1" height="18" fill="#716F64" />
<rect x="54" y="691" width="1" height="18" fill="#ACA899" />
<rect x="55" y="691" width="78" height="1" fill="#716F64" />
<path fill="#000" d="M13 697h9v1h-9zM17 698h1v1h-1zM17 699h1v1h-1zM17 700h1v1h-1zM17 701h1v1h-1zM17 702h1v1h-1zM17 703h1v1h-1zM17 704h1v1h-1zM12 705h11v1h-11zM27 696h1v1h-1zM29 696h5v1h-5zM24 697h3v1h-3zM29 697h1v1h-1zM33 697h1v1h-1zM26 698h1v1h-1zM29 698h1v1h-1zM33 698h1v1h-1zM24 699h4v1h-4zM29 699h5v1h-5zM26 700h1v1h-1zM26 701h2v1h-2zM29 701h5v1h-5zM25 702h2v1h-2zM28 702h1v1h-1zM31 702h1v1h-1zM25 703h2v1h-2zM29 703h5v1h-5zM24 704h1v1h-1zM26 704h1v1h-1zM31 704h1v1h-1zM26 705h1v1h-1zM31 705h1v1h-1zM26 706h1v1h-1zM28 706h7v1h-7z"/>
<rect x="12.5" y="141.5" width="8" height="8" fill="#fff" stroke="#A0A0A0"/>
<rect x="14" y="145" width="5" height="1" fill="#000" />
<rect x="22" y="145" width="1" height="1" fill="#A0A0A0" />
<rect x="24" y="145" width="1" height="1" fill="#A0A0A0" />
<rect x="26" y="145" width="1" height="1" fill="#A0A0A0" />
<path d="M28 137h11l3 3v12h-14z" fill="#22D03A"/>
<rect x="28" y="151" width="15" height="1" fill="#000" />
<rect x="42" y="140" width="1" height="12" fill="#000" />
<path d="M31 144l5-5 5 4-5 6z" fill="none" stroke="#000" stroke-width="1"/>
<path d="M30 144l2-2 2 2-2 2z" fill="#40E8F0" stroke="#000" stroke-width=".5"/><circle cx="37.5" cy="146.5" r="1.8" fill="#F0F040" stroke="#000" stroke-width=".6"/><path d="M33 140h3l-1 2z" fill="#803050"/>
<rect x="35" y="153" width="1" height="1" fill="#A0A0A0" />
<rect x="35" y="155" width="1" height="1" fill="#A0A0A0" />
<rect x="35" y="157" width="1" height="1" fill="#A0A0A0" />
<rect x="35" y="159" width="1" height="1" fill="#A0A0A0" />
<rect x="35" y="161" width="1" height="1" fill="#A0A0A0" />
<rect x="35" y="163" width="1" height="1" fill="#A0A0A0" />
<rect x="35" y="165" width="1" height="1" fill="#A0A0A0" />
<rect x="35" y="167" width="1" height="1" fill="#A0A0A0" />
<rect x="35" y="169" width="1" height="1" fill="#A0A0A0" />
<rect x="35" y="171" width="1" height="1" fill="#A0A0A0" />
<rect x="35" y="173" width="1" height="1" fill="#A0A0A0" />
<rect x="35" y="175" width="1" height="1" fill="#A0A0A0" />
<rect x="35" y="177" width="1" height="1" fill="#A0A0A0" />
<rect x="35" y="179" width="1" height="1" fill="#A0A0A0" />
<rect x="35" y="181" width="1" height="1" fill="#A0A0A0" />
<rect x="35" y="183" width="1" height="1" fill="#A0A0A0" />
<rect x="35" y="185" width="1" height="1" fill="#A0A0A0" />
<rect x="35" y="187" width="1" height="1" fill="#A0A0A0" />
<rect x="35" y="189" width="1" height="1" fill="#A0A0A0" />
<rect x="35" y="191" width="1" height="1" fill="#A0A0A0" />
<rect x="35" y="193" width="1" height="1" fill="#A0A0A0" />
<rect x="35" y="195" width="1" height="1" fill="#A0A0A0" />
<rect x="35" y="197" width="1" height="1" fill="#A0A0A0" />
<rect x="35" y="199" width="1" height="1" fill="#A0A0A0" />
<rect x="35" y="201" width="1" height="1" fill="#A0A0A0" />
<rect x="35" y="203" width="1" height="1" fill="#A0A0A0" />
<rect x="35" y="205" width="1" height="1" fill="#A0A0A0" />
<rect x="35" y="207" width="1" height="1" fill="#A0A0A0" />
<rect x="35" y="209" width="1" height="1" fill="#A0A0A0" />
<rect x="35" y="211" width="1" height="1" fill="#A0A0A0" />
<rect x="35" y="213" width="1" height="1" fill="#A0A0A0" />
<rect x="35" y="215" width="1" height="1" fill="#A0A0A0" />
<rect x="35" y="217" width="1" height="1" fill="#A0A0A0" />
<rect x="35" y="219" width="1" height="1" fill="#A0A0A0" />
<rect x="35" y="221" width="1" height="1" fill="#A0A0A0" />
<rect x="35" y="223" width="1" height="1" fill="#A0A0A0" />
<rect x="35" y="225" width="1" height="1" fill="#A0A0A0" />
<rect x="31.5" y="157.5" width="8" height="8" fill="#fff" stroke="#A0A0A0"/>
<rect x="33" y="161" width="5" height="1" fill="#000" />
<rect x="41" y="161" width="1" height="1" fill="#A0A0A0" />
<rect x="43" y="161" width="1" height="1" fill="#A0A0A0" />
<rect x="45" y="161" width="1" height="1" fill="#A0A0A0" />
<path d="M46.5 153.5h10l4 4v11.5h-14z" fill="#fff" stroke="#000" stroke-width="1"/>
<path d="M56.5 153.5v4h4" fill="#fff" stroke="#000" stroke-width=".8"/>
<rect x="46" y="168" width="15" height="1" fill="#000" />
<rect x="60" y="157" width="1" height="12" fill="#000" />
<g stroke="#0010A0" stroke-width="1" fill="none"><path d="M47.5 158.5h3M53 158.5h2M56.5 158.5h2M47.5 162.5h3M53 162.5h5M49.5 156.5v4M51.5 156.5v4M49.5 160.5v4M51.5 160.5v4M53.5 162.5v3.5h5M55 166.5h1M57 164.5h1"/></g>
<rect x="54" y="169" width="1" height="1" fill="#A0A0A0" />
<rect x="54" y="171" width="1" height="1" fill="#A0A0A0" />
<rect x="54" y="173" width="1" height="1" fill="#A0A0A0" />
<rect x="54" y="175" width="1" height="1" fill="#A0A0A0" />
<rect x="54" y="177" width="1" height="1" fill="#A0A0A0" />
<rect x="55" y="177" width="1" height="1" fill="#A0A0A0" />
<rect x="57" y="177" width="1" height="1" fill="#A0A0A0" />
<rect x="59" y="177" width="1" height="1" fill="#A0A0A0" />
<rect x="61" y="177" width="1" height="1" fill="#A0A0A0" />
<rect x="63" y="177" width="1" height="1" fill="#A0A0A0" />
<path d="M65.5 169.5h10l4 4v11.5h-14z" fill="#fff" stroke="#000" stroke-width="1"/>
<path d="M75.5 169.5v4h4" fill="#fff" stroke="#000" stroke-width=".8"/>
<rect x="65" y="184" width="15" height="1" fill="#000" />
<rect x="79" y="173" width="1" height="12" fill="#000" />
<rect x="67" y="171" width="5" height="3" fill="#000060"/><path d="M69.5 174v2.5M67.5 176.5h9v3h-9zM71.5 179.5v3h6" stroke="#0010A0" fill="none" stroke-width="1.1"/>
<rect x="31.5" y="189.5" width="8" height="8" fill="#fff" stroke="#A0A0A0"/>
<rect x="33" y="193" width="5" height="1" fill="#000" />
<rect x="35" y="191" width="1" height="5" fill="#000" />
<rect x="41" y="193" width="1" height="1" fill="#A0A0A0" />
<rect x="43" y="193" width="1" height="1" fill="#A0A0A0" />
<rect x="45" y="193" width="1" height="1" fill="#A0A0A0" />
<path d="M46.5 185.5h10l4 4v11.5h-14z" fill="#fff" stroke="#000" stroke-width="1"/>
<path d="M56.5 185.5v4h4" fill="#fff" stroke="#000" stroke-width=".8"/>
<rect x="46" y="200" width="15" height="1" fill="#000" />
<rect x="60" y="189" width="1" height="12" fill="#000" />
<rect x="48" y="187" width="4" height="4" fill="#404060"/><rect x="54" y="187" width="4" height="4" fill="#C0F040" stroke="#406000" stroke-width=".6"/><path d="M50 191l3 3 3-3M53 194v2M51.5 196.5h4v3h-4z" stroke="#4020A0" fill="none" stroke-width="1.1"/>
<rect x="31.5" y="205.5" width="8" height="8" fill="#fff" stroke="#A0A0A0"/>
<rect x="33" y="209" width="5" height="1" fill="#000" />
<rect x="35" y="207" width="1" height="5" fill="#000" />
<rect x="41" y="209" width="1" height="1" fill="#A0A0A0" />
<rect x="43" y="209" width="1" height="1" fill="#A0A0A0" />
<rect x="45" y="209" width="1" height="1" fill="#A0A0A0" />
<path d="M46.5 201.5h10l4 4v11.5h-14z" fill="#fff" stroke="#000" stroke-width="1"/>
<path d="M56.5 201.5v4h4" fill="#fff" stroke="#000" stroke-width=".8"/>
<rect x="46" y="216" width="15" height="1" fill="#000" />
<rect x="60" y="205" width="1" height="12" fill="#000" />
<path d="M49 213l8-8" stroke="#30C030" stroke-width="1.5"/><rect x="50" y="207" width="4" height="4" fill="#805030" opacity=".8"/><rect x="54" y="207" width="3" height="3" fill="#202020"/>
<rect x="36" y="225" width="1" height="1" fill="#A0A0A0" />
<rect x="38" y="225" width="1" height="1" fill="#A0A0A0" />
<rect x="40" y="225" width="1" height="1" fill="#A0A0A0" />
<rect x="42" y="225" width="1" height="1" fill="#A0A0A0" />
<rect x="44" y="225" width="1" height="1" fill="#A0A0A0" />
<path d="M46.5 217.5h10l4 4v11.5h-14z" fill="#fff" stroke="#000" stroke-width="1"/>
<path d="M56.5 217.5v4h4" fill="#fff" stroke="#000" stroke-width=".8"/>
<rect x="46" y="232" width="15" height="1" fill="#000" />
<rect x="60" y="221" width="1" height="12" fill="#000" />
<path d="M48.5 219.5h6v7h-6zM50 222h4M50 224h3" stroke="#0010A0" fill="none" stroke-width="1.1"/><rect x="53" y="226" width="5" height="4" fill="#B08080" stroke="#000" stroke-width=".8"/>
<path fill="#000" d="M47 140h1v1h-1zM53 140h1v1h-1zM48 141h1v1h-1zM53 141h1v1h-1zM52 142h1v1h-1zM54 142h1v1h-1zM49 143h1v1h-1zM51 143h1v1h-1zM55 143h1v1h-1zM49 144h2v1h-2zM53 144h1v1h-1zM56 144h2v1h-2zM48 145h1v1h-1zM54 145h1v1h-1zM48 146h1v1h-1zM51 146h6v1h-6zM47 147h1v1h-1zM55 147h1v1h-1zM47 148h1v1h-1zM52 148h3v1h-3zM47 149h1v1h-1zM54 149h1v1h-1zM55 150h1v1h-1zM62 140h1v1h-1zM62 141h1v1h-1zM66 141h4v1h-4zM60 142h5v1h-5zM66 142h1v1h-1zM69 142h1v1h-1zM62 143h1v1h-1zM66 143h1v1h-1zM69 143h1v1h-1zM62 144h1v1h-1zM66 144h1v1h-1zM69 144h1v1h-1zM59 145h8v1h-8zM69 145h1v1h-1zM62 146h1v1h-1zM66 146h1v1h-1zM69 146h1v1h-1zM61 147h1v1h-1zM66 147h1v1h-1zM69 147h1v1h-1zM60 148h1v1h-1zM63 148h2v1h-2zM66 148h1v1h-1zM68 148h2v1h-2zM60 149h3v1h-3zM64 149h1v1h-1zM66 149h1v1h-1zM66 150h1v1h-1zM74 140h1v1h-1zM76 140h1v1h-1zM79 140h1v1h-1zM74 141h1v1h-1zM76 141h1v1h-1zM79 141h1v1h-1zM73 142h1v1h-1zM76 142h1v1h-1zM79 142h1v1h-1zM73 143h1v1h-1zM75 143h7v1h-7zM72 144h2v1h-2zM76 144h1v1h-1zM79 144h1v1h-1zM71 145h1v1h-1zM73 145h1v1h-1zM76 145h1v1h-1zM79 145h1v1h-1zM73 146h9v1h-9zM73 147h1v1h-1zM73 148h1v1h-1zM76 148h1v1h-1zM79 148h1v1h-1zM73 149h1v1h-1zM75 149h1v1h-1zM80 149h1v1h-1zM73 150h2v1h-2zM81 150h1v1h-1zM88 140h1v1h-1zM88 141h1v1h-1zM88 142h1v1h-1zM92 142h1v1h-1zM83 143h4v1h-4zM88 143h2v1h-2zM91 143h1v1h-1zM86 144h1v1h-1zM88 144h1v1h-1zM90 144h1v1h-1zM86 145h1v1h-1zM88 145h1v1h-1zM90 145h1v1h-1zM85 146h1v1h-1zM88 146h1v1h-1zM91 146h1v1h-1zM85 147h1v1h-1zM88 147h1v1h-1zM91 147h1v1h-1zM84 148h1v1h-1zM88 148h1v1h-1zM92 148h1v1h-1zM83 149h1v1h-1zM86 149h1v1h-1zM88 149h1v1h-1zM93 149h1v1h-1zM87 150h1v1h-1z"/>
<path fill="#000" d="M70 156h1v1h-1zM72 156h5v1h-5zM67 157h3v1h-3zM72 157h1v1h-1zM76 157h1v1h-1zM69 158h1v1h-1zM72 158h1v1h-1zM76 158h1v1h-1zM67 159h4v1h-4zM72 159h5v1h-5zM69 160h1v1h-1zM69 161h2v1h-2zM72 161h5v1h-5zM68 162h2v1h-2zM71 162h1v1h-1zM74 162h1v1h-1zM68 163h2v1h-2zM72 163h5v1h-5zM67 164h1v1h-1zM69 164h1v1h-1zM74 164h1v1h-1zM69 165h1v1h-1zM74 165h1v1h-1zM69 166h1v1h-1zM71 166h7v1h-7zM84 156h1v1h-1zM80 157h10v1h-10zM80 158h1v1h-1zM80 159h1v1h-1zM82 159h6v1h-6zM80 160h1v1h-1zM84 160h1v1h-1zM86 160h1v1h-1zM80 161h1v1h-1zM85 161h1v1h-1zM80 162h10v1h-10zM80 163h1v1h-1zM85 163h1v1h-1zM88 163h1v1h-1zM80 164h1v1h-1zM85 164h1v1h-1zM79 165h1v1h-1zM85 165h1v1h-1zM79 166h1v1h-1zM83 166h3v1h-3z"/>
<g font-family="Liberation Serif" font-size="13" font-weight="bold" fill="#000" stroke="#000" stroke-width="0.3"><text transform="translate(89.00 182) scale(0.448 1)" text-anchor="middle">M</text><text transform="translate(95.00 182) scale(0.586 1)" text-anchor="middle">A</text><text transform="translate(101.00 182) scale(0.750 1)" text-anchor="middle">I</text><text transform="translate(107.00 182) scale(0.586 1)" text-anchor="middle">N</text></g>
<path fill="#000" d="M68 188h1v1h-1zM73 188h1v1h-1zM68 189h1v1h-1zM73 189h1v1h-1zM67 190h5v1h-5zM73 190h5v1h-5zM68 191h1v1h-1zM73 191h1v1h-1zM77 191h1v1h-1zM67 192h1v1h-1zM69 192h1v1h-1zM72 192h1v1h-1zM74 192h1v1h-1zM76 192h1v1h-1zM67 193h5v1h-5zM74 193h1v1h-1zM69 194h1v1h-1zM74 194h1v1h-1zM69 195h3v1h-3zM73 195h1v1h-1zM75 195h1v1h-1zM67 196h3v1h-3zM73 196h1v1h-1zM75 196h1v1h-1zM69 197h1v1h-1zM72 197h1v1h-1zM76 197h1v1h-1zM69 198h1v1h-1zM71 198h1v1h-1zM77 198h1v1h-1zM81 189h8v1h-8zM80 192h10v1h-10zM83 193h1v1h-1zM86 193h1v1h-1zM83 194h1v1h-1zM86 194h1v1h-1zM82 195h1v1h-1zM86 195h1v1h-1zM82 196h1v1h-1zM86 196h1v1h-1zM89 196h1v1h-1zM81 197h1v1h-1zM86 197h1v1h-1zM89 197h1v1h-1zM80 198h1v1h-1zM87 198h3v1h-3zM94 188h1v1h-1zM98 188h1v1h-1zM94 189h1v1h-1zM96 189h1v1h-1zM98 189h1v1h-1zM93 190h1v1h-1zM96 190h1v1h-1zM98 190h1v1h-1zM93 191h1v1h-1zM95 191h6v1h-6zM92 192h3v1h-3zM98 192h1v1h-1zM91 193h1v1h-1zM93 193h1v1h-1zM98 193h1v1h-1zM93 194h1v1h-1zM95 194h7v1h-7zM93 195h1v1h-1zM98 195h1v1h-1zM93 196h1v1h-1zM98 196h1v1h-1zM93 197h1v1h-1zM98 197h1v1h-1zM93 198h1v1h-1zM98 198h1v1h-1zM104 188h1v1h-1zM109 188h1v1h-1zM105 189h1v1h-1zM110 189h1v1h-1zM103 190h1v1h-1zM107 190h7v1h-7zM104 191h1v1h-1zM106 191h1v1h-1zM110 191h1v1h-1zM106 192h1v1h-1zM110 192h1v1h-1zM105 193h1v1h-1zM110 193h1v1h-1zM105 194h1v1h-1zM108 194h5v1h-5zM103 195h2v1h-2zM110 195h1v1h-1zM104 196h1v1h-1zM110 196h1v1h-1zM104 197h1v1h-1zM110 197h1v1h-1zM104 198h1v1h-1zM107 198h7v1h-7zM118 188h7v1h-7zM115 189h3v1h-3zM121 189h1v1h-1zM123 189h1v1h-1zM115 190h1v1h-1zM117 190h1v1h-1zM119 190h1v1h-1zM122 190h1v1h-1zM116 191h3v1h-3zM121 191h1v1h-1zM123 191h1v1h-1zM115 192h6v1h-6zM122 192h1v1h-1zM124 192h2v1h-2zM117 193h2v1h-2zM122 193h1v1h-1zM116 194h2v1h-2zM119 194h6v1h-6zM115 195h1v1h-1zM117 195h1v1h-1zM122 195h1v1h-1zM115 196h1v1h-1zM117 196h1v1h-1zM119 196h7v1h-7zM117 197h1v1h-1zM122 197h1v1h-1zM117 198h1v1h-1zM122 198h1v1h-1z"/>
<path fill="#000" d="M71 204h1v1h-1zM70 205h1v1h-1zM74 205h1v1h-1zM69 206h7v1h-7zM71 207h1v1h-1zM67 208h11v1h-11zM69 209h1v1h-1zM72 209h1v1h-1zM75 209h1v1h-1zM67 210h2v1h-2zM70 210h2v1h-2zM76 210h2v1h-2zM72 211h2v1h-2zM70 212h2v1h-2zM75 212h1v1h-1zM73 213h2v1h-2zM69 214h4v1h-4zM79 204h1v1h-1zM82 204h1v1h-1zM84 204h1v1h-1zM86 204h1v1h-1zM80 205h1v1h-1zM82 205h2v1h-2zM86 205h1v1h-1zM79 206h6v1h-6zM86 206h4v1h-4zM81 207h2v1h-2zM85 207h2v1h-2zM88 207h1v1h-1zM80 208h1v1h-1zM82 208h2v1h-2zM86 208h1v1h-1zM88 208h1v1h-1zM79 209h1v1h-1zM82 209h1v1h-1zM84 209h1v1h-1zM86 209h1v1h-1zM88 209h1v1h-1zM79 210h6v1h-6zM86 210h1v1h-1zM88 210h1v1h-1zM81 211h1v1h-1zM83 211h1v1h-1zM86 211h1v1h-1zM88 211h1v1h-1zM80 212h2v1h-2zM83 212h1v1h-1zM87 212h1v1h-1zM82 213h1v1h-1zM86 213h1v1h-1zM88 213h1v1h-1zM79 214h3v1h-3zM83 214h3v1h-3zM89 214h1v1h-1z"/>
<path fill="#000" d="M68 220h1v1h-1zM73 220h1v1h-1zM68 221h1v1h-1zM73 221h1v1h-1zM67 222h5v1h-5zM73 222h5v1h-5zM68 223h1v1h-1zM73 223h1v1h-1zM77 223h1v1h-1zM67 224h1v1h-1zM69 224h1v1h-1zM72 224h1v1h-1zM74 224h1v1h-1zM76 224h1v1h-1zM67 225h5v1h-5zM74 225h1v1h-1zM69 226h1v1h-1zM74 226h1v1h-1zM69 227h3v1h-3zM73 227h1v1h-1zM75 227h1v1h-1zM67 228h3v1h-3zM73 228h1v1h-1zM75 228h1v1h-1zM69 229h1v1h-1zM72 229h1v1h-1zM76 229h1v1h-1zM69 230h1v1h-1zM71 230h1v1h-1zM77 230h1v1h-1zM81 221h8v1h-8zM80 224h10v1h-10zM83 225h1v1h-1zM86 225h1v1h-1zM83 226h1v1h-1zM86 226h1v1h-1zM82 227h1v1h-1zM86 227h1v1h-1zM82 228h1v1h-1zM86 228h1v1h-1zM89 228h1v1h-1zM81 229h1v1h-1zM86 229h1v1h-1zM89 229h1v1h-1zM80 230h1v1h-1zM87 230h3v1h-3zM94 220h1v1h-1zM98 220h1v1h-1zM94 221h1v1h-1zM96 221h1v1h-1zM98 221h1v1h-1zM93 222h1v1h-1zM96 222h1v1h-1zM98 222h1v1h-1zM93 223h1v1h-1zM95 223h6v1h-6zM92 224h3v1h-3zM98 224h1v1h-1zM91 225h1v1h-1zM93 225h1v1h-1zM98 225h1v1h-1zM93 226h1v1h-1zM95 226h7v1h-7zM93 227h1v1h-1zM98 227h1v1h-1zM93 228h1v1h-1zM98 228h1v1h-1zM93 229h1v1h-1zM98 229h1v1h-1zM93 230h1v1h-1zM98 230h1v1h-1zM108 220h1v1h-1zM108 221h1v1h-1zM104 222h10v1h-10zM104 223h1v1h-1zM108 223h1v1h-1zM113 223h1v1h-1zM104 224h1v1h-1zM108 224h1v1h-1zM113 224h1v1h-1zM104 225h1v1h-1zM108 225h2v1h-2zM113 225h1v1h-1zM104 226h1v1h-1zM107 226h1v1h-1zM110 226h1v1h-1zM113 226h1v1h-1zM104 227h1v1h-1zM106 227h1v1h-1zM111 227h1v1h-1zM113 227h1v1h-1zM104 228h1v1h-1zM113 228h1v1h-1zM104 229h1v1h-1zM113 229h1v1h-1zM104 230h1v1h-1zM111 230h3v1h-3zM119 220h1v1h-1zM115 221h11v1h-11zM118 222h1v1h-1zM117 223h1v1h-1zM119 223h6v1h-6zM117 224h1v1h-1zM123 224h1v1h-1zM116 225h2v1h-2zM122 225h1v1h-1zM115 226h1v1h-1zM117 226h9v1h-9zM117 227h1v1h-1zM122 227h1v1h-1zM117 228h1v1h-1zM122 228h1v1h-1zM117 229h1v1h-1zM122 229h1v1h-1zM117 230h1v1h-1zM120 230h3v1h-3z"/>
<rect x="144" y="112" width="255" height="604" fill="#fff" />
<rect x="142" y="110" width="262" height="1" fill="#ACA899" />
<rect x="142" y="110" width="1" height="606" fill="#ACA899" />
<rect x="143" y="111" width="256" height="1" fill="#000" />
<rect x="143" y="111" width="1" height="605" fill="#000" />
<rect x="405" y="112" width="617" height="604" fill="#fff" />
<rect x="404" y="111" width="1" height="605" fill="#000" />
<rect x="404" y="111" width="618" height="1" fill="#000" />
<rect x="403" y="110" width="1" height="606" fill="#ACA899" />
<rect x="382" y="112" width="16" height="587" fill="#FCFCFA" />
<rect x="382" y="112" width="1" height="587" fill="#F0EFEA" />
<rect x="383" y="113" width="15" height="16" rx="2" fill="#B4C4EC"/>
<rect x="382.5" y="112.5" width="14" height="15" rx="2" fill="#C6D6FC" stroke="#F4F8FF" stroke-width="1"/>
<path d="M386 122 l4 -4 l4 4" stroke="#4D6185" stroke-width="2" fill="none"/>
<rect x="383" y="130" width="15" height="16" rx="2" fill="#B4C4EC"/>
<rect x="382.5" y="129.5" width="14" height="15" rx="2" fill="#C6D6FC" stroke="#F4F8FF" stroke-width="1"/>
<rect x="387" y="134" width="6" height="1" fill="#EEF4FE" />
<rect x="387" y="136" width="6" height="1" fill="#EEF4FE" />
<rect x="387" y="138" width="6" height="1" fill="#EEF4FE" />
<rect x="387" y="140" width="6" height="1" fill="#EEF4FE" />
<rect x="383" y="683" width="15" height="16" rx="2" fill="#B4C4EC"/>
<rect x="382.5" y="682.5" width="14" height="15" rx="2" fill="#C6D6FC" stroke="#F4F8FF" stroke-width="1"/>
<path d="M386 688 l4 4 l-0 0 l4 -4" stroke="#4D6185" stroke-width="2" fill="none"/>
<rect x="144" y="699" width="237" height="16" fill="#FCFCFA" />
<rect x="145" y="700" width="16" height="15" rx="2" fill="#B4C4EC"/>
<rect x="144.5" y="699.5" width="15" height="14" rx="2" fill="#C6D6FC" stroke="#F4F8FF" stroke-width="1"/>
<path d="M154 703 l-4 4 l4 4" stroke="#4D6185" stroke-width="2" fill="none"/>
<rect x="162" y="700" width="16" height="15" rx="2" fill="#B4C4EC"/>
<rect x="161.5" y="699.5" width="15" height="14" rx="2" fill="#C6D6FC" stroke="#F4F8FF" stroke-width="1"/>
<rect x="166" y="704" width="1" height="6" fill="#EEF4FE" />
<rect x="168" y="704" width="1" height="6" fill="#EEF4FE" />
<rect x="170" y="704" width="1" height="6" fill="#EEF4FE" />
<rect x="172" y="704" width="1" height="6" fill="#EEF4FE" />
<rect x="365" y="700" width="16" height="15" rx="2" fill="#B4C4EC"/>
<rect x="364.5" y="699.5" width="15" height="14" rx="2" fill="#C6D6FC" stroke="#F4F8FF" stroke-width="1"/>
<path d="M371 703 l4 4 l-4 4" stroke="#4D6185" stroke-width="2" fill="none"/>
<rect x="382" y="699" width="17" height="17" fill="#ECE9D8" />
<rect x="1006" y="112" width="16" height="604" fill="#FCFCFA" />
<rect x="1006" y="112" width="1" height="604" fill="#F0EFEA" />
<rect x="1007" y="113" width="15" height="16" rx="2" fill="#B4C4EC"/>
<rect x="1006.5" y="112.5" width="14" height="15" rx="2" fill="#C6D6FC" stroke="#F4F8FF" stroke-width="1"/>
<path d="M1010 122 l4 -4 l4 4" stroke="#4D6185" stroke-width="2" fill="none"/>
<rect x="1007" y="130" width="15" height="16" rx="2" fill="#B4C4EC"/>
<rect x="1006.5" y="129.5" width="14" height="15" rx="2" fill="#C6D6FC" stroke="#F4F8FF" stroke-width="1"/>
<rect x="1011" y="134" width="6" height="1" fill="#EEF4FE" />
<rect x="1011" y="136" width="6" height="1" fill="#EEF4FE" />
<rect x="1011" y="138" width="6" height="1" fill="#EEF4FE" />
<rect x="1011" y="140" width="6" height="1" fill="#EEF4FE" />
<rect x="1007" y="700" width="15" height="16" rx="2" fill="#B4C4EC"/>
<rect x="1006.5" y="699.5" width="14" height="15" rx="2" fill="#C6D6FC" stroke="#F4F8FF" stroke-width="1"/>
<path d="M1010 705 l4 4 l-0 0 l4 -4" stroke="#4D6185" stroke-width="2" fill="none"/>
<text x="190" y="124" font-family="Liberation Sans" font-size="11" fill="#000" text-anchor="middle">1</text>
<text x="263.5" y="124" font-family="Liberation Sans" font-size="11" fill="#000" text-anchor="middle">2</text>
<text x="337" y="124" font-family="Liberation Sans" font-size="11" fill="#000" text-anchor="middle">3</text>
<text x="172" y="143" font-family="Liberation Sans" font-size="11" fill="#000" text-anchor="end">1</text>
<text x="172" y="163" font-family="Liberation Sans" font-size="11" fill="#000" text-anchor="end">2</text>
<text x="172" y="183" font-family="Liberation Sans" font-size="11" fill="#000" text-anchor="end">3</text>
<text x="172" y="203" font-family="Liberation Sans" font-size="11" fill="#000" text-anchor="end">4</text>
<text x="172" y="222" font-family="Liberation Sans" font-size="11" fill="#000" text-anchor="end">5</text>
<text x="172" y="242" font-family="Liberation Sans" font-size="11" fill="#000" text-anchor="end">6</text>
<text x="172" y="262" font-family="Liberation Sans" font-size="11" fill="#000" text-anchor="end">7</text>
<text x="172" y="282" font-family="Liberation Sans" font-size="11" fill="#000" text-anchor="end">8</text>
<text x="172" y="301" font-family="Liberation Sans" font-size="11" fill="#000" text-anchor="end">9</text>
<text x="172" y="321" font-family="Liberation Sans" font-size="11" fill="#000" text-anchor="end">10</text>
<text x="172" y="341" font-family="Liberation Sans" font-size="11" fill="#000" text-anchor="end">11</text>
<text x="172" y="361" font-family="Liberation Sans" font-size="11" fill="#000" text-anchor="end">12</text>
<text x="172" y="380" font-family="Liberation Sans" font-size="11" fill="#000" text-anchor="end">13</text>
<text x="172" y="400" font-family="Liberation Sans" font-size="11" fill="#000" text-anchor="end">14</text>
<text x="172" y="420" font-family="Liberation Sans" font-size="11" fill="#000" text-anchor="end">15</text>
<text x="172" y="440" font-family="Liberation Sans" font-size="11" fill="#000" text-anchor="end">16</text>
<text x="172" y="459" font-family="Liberation Sans" font-size="11" fill="#000" text-anchor="end">17</text>
<text x="172" y="479" font-family="Liberation Sans" font-size="11" fill="#000" text-anchor="end">18</text>
<text x="172" y="499" font-family="Liberation Sans" font-size="11" fill="#000" text-anchor="end">19</text>
<text x="172" y="519" font-family="Liberation Sans" font-size="11" fill="#000" text-anchor="end">20</text>
<text x="172" y="538" font-family="Liberation Sans" font-size="11" fill="#000" text-anchor="end">21</text>
<text x="172" y="558" font-family="Liberation Sans" font-size="11" fill="#000" text-anchor="end">22</text>
<text x="172" y="578" font-family="Liberation Sans" font-size="11" fill="#000" text-anchor="end">23</text>
<text x="172" y="598" font-family="Liberation Sans" font-size="11" fill="#000" text-anchor="end">24</text>
<text x="172" y="617" font-family="Liberation Sans" font-size="11" fill="#000" text-anchor="end">25</text>
<text x="172" y="637" font-family="Liberation Sans" font-size="11" fill="#000" text-anchor="end">26</text>
<text x="172" y="657" font-family="Liberation Sans" font-size="11" fill="#000" text-anchor="end">27</text>
<text x="172" y="677" font-family="Liberation Sans" font-size="11" fill="#000" text-anchor="end">28</text>
<text x="172" y="696" font-family="Liberation Sans" font-size="11" fill="#000" text-anchor="end">29</text>
<rect x="187" y="150" width="1" height="549" fill="#000" />
<rect x="178.5" y="130.5" width="18" height="19" fill="#fff" stroke="#000" stroke-width="1"/>
<rect x="180.5" y="132.5" width="14" height="15" fill="#fff" stroke="#000" stroke-width="1"/>
<text x="197" y="143" font-family="Liberation Sans" font-size="11" fill="#000" text-anchor="start">0</text>
<rect x="261" y="139" width="1" height="1" fill="#000" />
<rect x="335" y="139" width="1" height="1" fill="#000" />
<rect x="178.5" y="190.5" width="18" height="19" fill="#fff" stroke="#000" stroke-width="1"/>
<text x="197" y="203" font-family="Liberation Sans" font-size="11" fill="#000" text-anchor="start">10</text>
<rect x="261" y="199" width="1" height="1" fill="#000" />
<rect x="335" y="199" width="1" height="1" fill="#000" />
<rect x="178.5" y="249.5" width="18" height="19" fill="#fff" stroke="#000" stroke-width="1"/>
<rect x="186" y="257" width="3" height="3" fill="#000" />
<text x="197" y="262" font-family="Liberation Sans" font-size="11" fill="#000" text-anchor="start">11</text>
<rect x="261" y="258" width="1" height="1" fill="#000" />
<rect x="335" y="258" width="1" height="1" fill="#000" />
<rect x="178.5" y="308.5" width="18" height="19" fill="#fff" stroke="#000" stroke-width="1"/>
<text x="197" y="321" font-family="Liberation Sans" font-size="11" fill="#000" text-anchor="start">12</text>
<rect x="261" y="317" width="1" height="1" fill="#000" />
<rect x="335" y="317" width="1" height="1" fill="#000" />
<rect x="178.5" y="367.5" width="18" height="19" fill="#fff" stroke="#000" stroke-width="1"/>
<text x="197" y="380" font-family="Liberation Sans" font-size="11" fill="#000" text-anchor="start">13</text>
<rect x="261" y="376" width="1" height="1" fill="#000" />
<rect x="335" y="376" width="1" height="1" fill="#000" />
<rect x="178.5" y="427.5" width="18" height="19" fill="#fff" stroke="#000" stroke-width="1"/>
<text x="197" y="440" font-family="Liberation Sans" font-size="11" fill="#000" text-anchor="start">14</text>
<rect x="261" y="436" width="1" height="1" fill="#000" />
<rect x="335" y="436" width="1" height="1" fill="#000" />
<rect x="178.5" y="486.5" width="18" height="19" fill="#fff" stroke="#000" stroke-width="1"/>
<text x="197" y="499" font-family="Liberation Sans" font-size="11" fill="#000" text-anchor="start">15</text>
<rect x="261" y="495" width="1" height="1" fill="#000" />
<rect x="335" y="495" width="1" height="1" fill="#000" />
<rect x="178.5" y="545.5" width="18" height="19" fill="#fff" stroke="#000" stroke-width="1"/>
<text x="197" y="558" font-family="Liberation Sans" font-size="11" fill="#000" text-anchor="start">16</text>
<rect x="261" y="554" width="1" height="1" fill="#000" />
<rect x="335" y="554" width="1" height="1" fill="#000" />
<rect x="178.5" y="604.5" width="18" height="19" fill="#fff" stroke="#000" stroke-width="1"/>
<text x="197" y="617" font-family="Liberation Sans" font-size="11" fill="#000" text-anchor="start">17</text>
<rect x="261" y="613" width="1" height="1" fill="#000" />
<rect x="335" y="613" width="1" height="1" fill="#000" />
<rect x="178.5" y="664.5" width="18" height="19" fill="#fff" stroke="#000" stroke-width="1"/>
<text x="197" y="677" font-family="Liberation Sans" font-size="11" fill="#000" text-anchor="start">18</text>
<rect x="261" y="673" width="1" height="1" fill="#000" />
<rect x="335" y="673" width="1" height="1" fill="#000" />
<rect x="178" y="160" width="19" height="1" fill="#000" />
<text x="197" y="163" font-family="Liberation Sans" font-size="11" fill="#000" text-anchor="start">0</text>
<rect x="178" y="219" width="19" height="1" fill="#000" />
<text x="197" y="222" font-family="Liberation Sans" font-size="11" fill="#000" text-anchor="start">1</text>
<rect x="178" y="278" width="19" height="1" fill="#000" />
<text x="197" y="282" font-family="Liberation Sans" font-size="11" fill="#000" text-anchor="start">2</text>
<rect x="178" y="337" width="19" height="1" fill="#000" />
<text x="197" y="341" font-family="Liberation Sans" font-size="11" fill="#000" text-anchor="start">3</text>
<rect x="178" y="397" width="19" height="1" fill="#000" />
<text x="197" y="400" font-family="Liberation Sans" font-size="11" fill="#000" text-anchor="start">4</text>
<rect x="178" y="456" width="19" height="1" fill="#000" />
<text x="197" y="459" font-family="Liberation Sans" font-size="11" fill="#000" text-anchor="start">5</text>
<rect x="178" y="515" width="19" height="1" fill="#000" />
<text x="197" y="519" font-family="Liberation Sans" font-size="11" fill="#000" text-anchor="start">6</text>
<rect x="178" y="574" width="19" height="1" fill="#000" />
<text x="197" y="578" font-family="Liberation Sans" font-size="11" fill="#000" text-anchor="start">7</text>
<rect x="178" y="634" width="19" height="1" fill="#000" />
<text x="197" y="637" font-family="Liberation Sans" font-size="11" fill="#000" text-anchor="start">8</text>
<rect x="178" y="693" width="19" height="1" fill="#000" />
<text x="197" y="696" font-family="Liberation Sans" font-size="11" fill="#000" text-anchor="start">9</text>
<rect x="179" y="190.5" width="72" height="17" fill="none" stroke="#7030A0" stroke-width="2"/>
<rect x="485" y="112" width="1" height="604" fill="#000" />
<rect x="933" y="112" width="1" height="604" fill="#000" />
<rect x="486" y="143" width="290" height="1" fill="#000" />
<rect x="557" y="143" width="1" height="143" fill="#000" />
<rect x="557" y="285" width="31" height="1" fill="#000" />
<rect x="587" y="275" width="1" height="20" fill="#000" />
<rect x="599" y="275" width="1" height="20" fill="#000" />
<rect x="599" y="285" width="177" height="1" fill="#000" />
<rect x="776" y="134" width="1" height="19" fill="#000" />
<rect x="776" y="134" width="5" height="1" fill="#000" />
<rect x="776" y="152" width="5" height="1" fill="#000" />
<rect x="931" y="134" width="1" height="19" fill="#000" />
<rect x="926" y="134" width="6" height="1" fill="#000" />
<rect x="926" y="152" width="6" height="1" fill="#000" />
<rect x="931" y="143" width="3" height="1" fill="#000" />
<rect x="776" y="276" width="1" height="19" fill="#000" />
<rect x="776" y="276" width="5" height="1" fill="#000" />
<rect x="776" y="294" width="5" height="1" fill="#000" />
<rect x="931" y="276" width="1" height="19" fill="#000" />
<rect x="926" y="276" width="6" height="1" fill="#000" />
<rect x="926" y="294" width="6" height="1" fill="#000" />
<rect x="931" y="285" width="3" height="1" fill="#000" />
<g font-family="Liberation Sans" font-size="14" font-weight="normal" fill="#000"><text transform="translate(478.00 147) scale(0.963 1)" text-anchor="middle">0</text></g>
<g font-family="Liberation Serif" font-size="15.5" font-weight="normal" fill="#000" stroke="#000" stroke-width="0.12"><text transform="translate(785.00 147) scale(0.870 1.08)" text-anchor="middle">S</text><text transform="translate(793.00 147) scale(0.792 1.08)" text-anchor="middle">E</text><text transform="translate(801.00 147) scale(0.792 1.08)" text-anchor="middle">T</text></g>
<g font-family="Liberation Serif" font-size="15.5" font-weight="normal" fill="#000" stroke="#000" stroke-width="0.12"><text transform="translate(857.00 147) scale(0.670 1.08)" text-anchor="middle">Y</text><text transform="translate(865.00 147) scale(0.968 1.08)" text-anchor="middle">0</text><text transform="translate(873.00 147) scale(0.968 1.08)" text-anchor="middle">0</text><text transform="translate(881.00 147) scale(0.968 1.08)" text-anchor="middle">1</text></g>
<path fill="#008000" d="M880 154h1v1h-1zM886 154h1v1h-1zM888 154h1v1h-1zM880 155h1v1h-1zM886 155h1v1h-1zM889 155h1v1h-1zM879 156h1v1h-1zM886 156h1v1h-1zM879 157h1v1h-1zM882 157h1v1h-1zM886 157h1v1h-1zM888 157h3v1h-3zM878 158h1v1h-1zM882 158h1v1h-1zM884 158h4v1h-4zM877 159h5v1h-5zM886 159h1v1h-1zM880 160h1v1h-1zM886 160h1v1h-1zM888 160h4v1h-4zM879 161h1v1h-1zM883 161h5v1h-5zM878 162h1v1h-1zM886 162h1v1h-1zM890 162h1v1h-1zM877 163h6v1h-6zM886 163h1v1h-1zM889 163h1v1h-1zM878 164h1v1h-1zM887 164h2v1h-2zM887 165h1v1h-1zM891 165h1v1h-1zM880 166h3v1h-3zM886 166h1v1h-1zM888 166h1v1h-1zM891 166h1v1h-1zM877 167h3v1h-3zM885 167h1v1h-1zM889 167h1v1h-1zM891 167h1v1h-1zM878 168h1v1h-1zM883 168h2v1h-2zM890 168h2v1h-2zM891 169h1v1h-1zM894 155h13v1h-13zM894 156h1v1h-1zM897 156h1v1h-1zM900 156h1v1h-1zM903 156h1v1h-1zM906 156h1v1h-1zM894 157h1v1h-1zM898 157h1v1h-1zM900 157h1v1h-1zM902 157h1v1h-1zM906 157h1v1h-1zM894 158h1v1h-1zM896 158h9v1h-9zM906 158h1v1h-1zM894 159h1v1h-1zM899 159h1v1h-1zM906 159h1v1h-1zM894 160h13v1h-13zM894 161h1v1h-1zM897 161h1v1h-1zM903 161h1v1h-1zM906 161h1v1h-1zM894 162h1v1h-1zM896 162h1v1h-1zM898 162h5v1h-5zM904 162h1v1h-1zM906 162h1v1h-1zM894 163h2v1h-2zM898 163h1v1h-1zM902 163h1v1h-1zM905 163h2v1h-2zM894 164h1v1h-1zM898 164h1v1h-1zM901 164h2v1h-2zM906 164h1v1h-1zM894 165h1v1h-1zM898 165h1v1h-1zM903 165h1v1h-1zM906 165h1v1h-1zM894 166h1v1h-1zM899 166h5v1h-5zM906 166h1v1h-1zM894 167h1v1h-1zM906 167h1v1h-1zM894 168h13v1h-13zM894 169h1v1h-1zM906 169h1v1h-1z"/><g font-family="Liberation Serif" font-size="15.5" font-weight="normal" fill="#008000" stroke="#008000" stroke-width="0.12"><text transform="translate(857.00 167) scale(0.670 1.08)" text-anchor="middle">K</text><text transform="translate(865.00 167) scale(0.544 1.08)" text-anchor="middle">M</text><text transform="translate(873.00 167) scale(0.968 1.08)" text-anchor="middle">1</text></g>
<g font-family="Liberation Serif" font-size="15.5" font-weight="normal" fill="#000" stroke="#000" stroke-width="0.12"><text transform="translate(581.00 270) scale(0.670 1.08)" text-anchor="middle">X</text><text transform="translate(589.00 270) scale(0.968 1.08)" text-anchor="middle">0</text><text transform="translate(597.00 270) scale(0.968 1.08)" text-anchor="middle">1</text><text transform="translate(605.00 270) scale(0.968 1.08)" text-anchor="middle">0</text></g>
<g font-family="Liberation Serif" font-size="15.5" font-weight="normal" fill="#000" stroke="#000" stroke-width="0.12"><text transform="translate(785.00 289) scale(0.870 1.08)" text-anchor="middle">S</text><text transform="translate(793.00 289) scale(0.792 1.08)" text-anchor="middle">E</text><text transform="translate(801.00 289) scale(0.792 1.08)" text-anchor="middle">T</text></g>
<g font-family="Liberation Serif" font-size="15.5" font-weight="normal" fill="#000" stroke="#000" stroke-width="0.12"><text transform="translate(857.00 289) scale(0.670 1.08)" text-anchor="middle">Y</text><text transform="translate(865.00 289) scale(0.968 1.08)" text-anchor="middle">0</text><text transform="translate(873.00 289) scale(0.968 1.08)" text-anchor="middle">1</text><text transform="translate(881.00 289) scale(0.968 1.08)" text-anchor="middle">0</text></g>
<g font-family="Liberation Serif" font-size="15.5" font-weight="normal" fill="#008000" stroke="#008000" stroke-width="0.12"><text transform="translate(857.00 309) scale(0.870 1.08)" text-anchor="middle">S</text><text transform="translate(865.00 309) scale(0.870 1.08)" text-anchor="middle">F</text><text transform="translate(873.00 309) scale(0.792 1.08)" text-anchor="middle">T</text></g>
<path fill="#008000" d="M588 296h1v1h-1zM584 297h1v1h-1zM588 297h1v1h-1zM592 297h1v1h-1zM585 298h1v1h-1zM588 298h1v1h-1zM591 298h1v1h-1zM582 299h14v1h-14zM582 300h1v1h-1zM595 300h1v1h-1zM581 301h1v1h-1zM584 301h9v1h-9zM594 301h1v1h-1zM584 302h1v1h-1zM592 302h1v1h-1zM584 303h9v1h-9zM588 304h1v1h-1zM583 305h11v1h-11zM583 306h1v1h-1zM588 306h1v1h-1zM593 306h1v1h-1zM583 307h1v1h-1zM588 307h1v1h-1zM593 307h1v1h-1zM583 308h1v1h-1zM588 308h1v1h-1zM591 308h1v1h-1zM593 308h1v1h-1zM583 309h1v1h-1zM588 309h1v1h-1zM592 309h1v1h-1zM588 310h1v1h-1zM588 311h1v1h-1zM598 297h13v1h-13zM601 298h1v1h-1zM607 298h1v1h-1zM601 299h1v1h-1zM607 299h1v1h-1zM601 300h1v1h-1zM607 300h1v1h-1zM601 301h1v1h-1zM607 301h1v1h-1zM601 302h1v1h-1zM607 302h1v1h-1zM597 303h15v1h-15zM601 304h1v1h-1zM607 304h1v1h-1zM601 305h1v1h-1zM607 305h1v1h-1zM601 306h1v1h-1zM607 306h1v1h-1zM601 307h1v1h-1zM607 307h1v1h-1zM600 308h1v1h-1zM607 308h1v1h-1zM600 309h1v1h-1zM607 309h1v1h-1zM599 310h1v1h-1zM607 310h1v1h-1zM598 311h1v1h-1zM607 311h1v1h-1zM615 296h1v1h-1zM623 296h1v1h-1zM615 297h1v1h-1zM623 297h1v1h-1zM614 298h4v1h-4zM623 298h1v1h-1zM614 299h1v1h-1zM617 299h1v1h-1zM620 299h7v1h-7zM613 300h1v1h-1zM616 300h1v1h-1zM620 300h1v1h-1zM623 300h1v1h-1zM626 300h1v1h-1zM614 301h5v1h-5zM620 301h1v1h-1zM623 301h1v1h-1zM626 301h1v1h-1zM614 302h1v1h-1zM616 302h1v1h-1zM618 302h1v1h-1zM620 302h1v1h-1zM623 302h1v1h-1zM626 302h1v1h-1zM614 303h1v1h-1zM616 303h1v1h-1zM618 303h1v1h-1zM620 303h1v1h-1zM623 303h1v1h-1zM626 303h1v1h-1zM614 304h5v1h-5zM620 304h7v1h-7zM614 305h1v1h-1zM616 305h1v1h-1zM618 305h1v1h-1zM620 305h1v1h-1zM623 305h1v1h-1zM626 305h1v1h-1zM614 306h1v1h-1zM616 306h1v1h-1zM618 306h1v1h-1zM623 306h1v1h-1zM614 307h5v1h-5zM623 307h1v1h-1zM625 307h1v1h-1zM614 308h1v1h-1zM616 308h1v1h-1zM618 308h1v1h-1zM623 308h1v1h-1zM626 308h1v1h-1zM614 309h1v1h-1zM616 309h1v1h-1zM618 309h10v1h-10zM614 310h1v1h-1zM618 310h1v1h-1zM620 310h1v1h-1zM627 310h1v1h-1zM613 311h1v1h-1zM617 311h2v1h-2z"/><g font-family="Liberation Serif" font-size="15.5" font-weight="normal" fill="#008000" stroke="#008000" stroke-width="0.12"><text transform="translate(561.00 309) scale(0.670 1.08)" text-anchor="middle">K</text><text transform="translate(569.00 309) scale(0.544 1.08)" text-anchor="middle">M</text><text transform="translate(577.00 309) scale(0.968 1.08)" text-anchor="middle">1</text></g>
<path fill="#008000" d="M563 316h1v1h-1zM563 317h1v1h-1zM563 318h1v1h-1zM563 319h8v1h-8zM563 320h1v1h-1zM563 321h1v1h-1zM559 322h10v1h-10zM559 323h1v1h-1zM568 323h1v1h-1zM559 324h1v1h-1zM568 324h1v1h-1zM559 325h1v1h-1zM568 325h1v1h-1zM559 326h10v1h-10zM559 328h1v1h-1zM562 328h1v1h-1zM565 328h1v1h-1zM569 328h1v1h-1zM559 329h1v1h-1zM563 329h1v1h-1zM566 329h1v1h-1zM570 329h1v1h-1zM558 330h1v1h-1zM563 330h1v1h-1zM566 330h1v1h-1zM570 330h1v1h-1zM557 331h1v1h-1zM570 331h1v1h-1z"/>
<g font-family="Liberation Sans" font-size="14" font-weight="normal" fill="#000"><text transform="translate(478.00 431) scale(0.963 1)" text-anchor="middle">3</text></g>
<rect x="0" y="716" width="1024" height="22" fill="#ECE9D8" />
<rect x="0" y="717" width="1024" height="1" fill="#ACA899" />
<rect x="0" y="718" width="1024" height="1" fill="#FFFFFF" />
<path fill="#000" d="M6 723h1v1h-1zM8 723h1v1h-1zM2 724h1v1h-1zM6 724h1v1h-1zM9 724h1v1h-1zM3 725h1v1h-1zM6 725h7v1h-7zM3 726h1v1h-1zM5 726h2v1h-2zM9 726h1v1h-1zM6 727h1v1h-1zM9 727h1v1h-1zM4 728h1v1h-1zM6 728h6v1h-6zM4 729h1v1h-1zM6 729h1v1h-1zM9 729h1v1h-1zM2 730h2v1h-2zM6 730h6v1h-6zM3 731h1v1h-1zM6 731h1v1h-1zM9 731h1v1h-1zM3 732h1v1h-1zM6 732h1v1h-1zM9 732h1v1h-1zM3 733h1v1h-1zM6 733h7v1h-7zM17 723h1v1h-1zM17 724h6v1h-6zM16 725h2v1h-2zM21 725h1v1h-1zM15 726h1v1h-1zM18 726h3v1h-3zM18 727h1v1h-1zM20 727h2v1h-2zM16 728h2v1h-2zM22 728h3v1h-3zM14 729h9v1h-9zM16 730h1v1h-1zM19 730h1v1h-1zM22 730h1v1h-1zM16 731h7v1h-7zM16 732h1v1h-1zM19 732h1v1h-1zM22 732h1v1h-1zM16 733h7v1h-7zM31 723h1v1h-1zM27 724h10v1h-10zM27 725h1v1h-1zM36 725h1v1h-1zM26 726h1v1h-1zM29 726h5v1h-5zM35 726h1v1h-1zM27 728h10v1h-10zM30 729h1v1h-1zM32 729h1v1h-1zM29 730h1v1h-1zM32 730h1v1h-1zM29 731h1v1h-1zM32 731h1v1h-1zM36 731h1v1h-1zM28 732h1v1h-1zM32 732h1v1h-1zM36 732h1v1h-1zM27 733h1v1h-1zM33 733h4v1h-4zM39 723h1v1h-1zM44 723h1v1h-1zM39 724h1v1h-1zM44 724h1v1h-1zM47 724h1v1h-1zM39 725h4v1h-4zM44 725h3v1h-3zM39 726h1v1h-1zM44 726h1v1h-1zM48 726h1v1h-1zM39 727h1v1h-1zM42 727h1v1h-1zM44 727h1v1h-1zM48 727h1v1h-1zM39 728h3v1h-3zM45 728h4v1h-4zM43 729h1v1h-1zM38 730h11v1h-11zM43 731h1v1h-1zM43 732h1v1h-1zM43 733h1v1h-1z"/>
<rect x="405" y="721" width="86" height="1" fill="#ACA899" />
<rect x="405" y="721" width="1" height="17" fill="#ACA899" />
<rect x="490" y="721" width="1" height="17" fill="#FFFFFF" />
<rect x="493" y="721" width="156" height="1" fill="#ACA899" />
<rect x="493" y="721" width="1" height="17" fill="#ACA899" />
<rect x="648" y="721" width="1" height="17" fill="#FFFFFF" />
<rect x="664" y="721" width="95" height="1" fill="#ACA899" />
<rect x="664" y="721" width="1" height="17" fill="#ACA899" />
<rect x="758" y="721" width="1" height="17" fill="#FFFFFF" />
<rect x="762" y="721" width="76" height="1" fill="#ACA899" />
<rect x="762" y="721" width="1" height="17" fill="#ACA899" />
<rect x="837" y="721" width="1" height="17" fill="#FFFFFF" />
<rect x="839" y="721" width="56" height="1" fill="#ACA899" />
<rect x="839" y="721" width="1" height="17" fill="#ACA899" />
<rect x="894" y="721" width="1" height="17" fill="#FFFFFF" />
<rect x="898" y="721" width="42" height="1" fill="#ACA899" />
<rect x="898" y="721" width="1" height="17" fill="#ACA899" />
<rect x="939" y="721" width="1" height="17" fill="#FFFFFF" />
<rect x="942" y="721" width="24" height="1" fill="#ACA899" />
<rect x="942" y="721" width="1" height="17" fill="#ACA899" />
<rect x="965" y="721" width="1" height="17" fill="#FFFFFF" />
<rect x="967" y="721" width="25" height="1" fill="#ACA899" />
<rect x="967" y="721" width="1" height="17" fill="#ACA899" />
<rect x="991" y="721" width="1" height="17" fill="#FFFFFF" />
<rect x="993" y="721" width="30" height="1" fill="#ACA899" />
<rect x="993" y="721" width="1" height="17" fill="#ACA899" />
<rect x="1022" y="721" width="1" height="17" fill="#FFFFFF" />
<g font-family="Liberation Serif" font-size="13" font-weight="normal" fill="#000" stroke="#000" stroke-width="0.3"><text transform="translate(411.00 734) scale(0.761 1)" text-anchor="middle">F</text><text transform="translate(417.00 734) scale(0.586 1)" text-anchor="middle">X</text><text transform="translate(423.00 734) scale(0.800 1)" text-anchor="middle">2</text><text transform="translate(429.00 734) scale(0.586 1)" text-anchor="middle">N</text><text transform="translate(435.00 734) scale(0.800 1)" text-anchor="middle">(</text><text transform="translate(441.00 734) scale(0.634 1)" text-anchor="middle">C</text><text transform="translate(447.00 734) scale(0.800 1)" text-anchor="middle">)</text></g>
<path fill="#000" d="M500 723h1v1h-1zM500 724h1v1h-1zM495 725h11v1h-11zM499 726h3v1h-3zM498 727h1v1h-1zM500 727h1v1h-1zM502 727h1v1h-1zM498 728h1v1h-1zM500 728h1v1h-1zM502 728h1v1h-1zM497 729h1v1h-1zM500 729h1v1h-1zM503 729h1v1h-1zM496 730h1v1h-1zM500 730h1v1h-1zM504 730h1v1h-1zM495 731h1v1h-1zM498 731h5v1h-5zM505 731h1v1h-1zM500 732h1v1h-1zM500 733h1v1h-1zM508 723h1v1h-1zM514 723h1v1h-1zM509 724h1v1h-1zM514 724h1v1h-1zM507 725h5v1h-5zM514 725h4v1h-4zM514 726h1v1h-1zM507 727h1v1h-1zM510 727h1v1h-1zM514 727h1v1h-1zM508 728h1v1h-1zM510 728h1v1h-1zM512 728h5v1h-5zM508 729h1v1h-1zM510 729h1v1h-1zM512 729h1v1h-1zM516 729h1v1h-1zM509 730h1v1h-1zM512 730h1v1h-1zM516 730h1v1h-1zM509 731h2v1h-2zM512 731h1v1h-1zM516 731h1v1h-1zM507 732h2v1h-2zM512 732h1v1h-1zM516 732h1v1h-1zM512 733h5v1h-5z"/>
<path fill="#000" d="M844 723h1v1h-1zM850 723h2v1h-2zM844 724h1v1h-1zM847 724h3v1h-3zM842 725h4v1h-4zM849 725h1v1h-1zM844 726h1v1h-1zM846 726h7v1h-7zM844 727h1v1h-1zM849 727h1v1h-1zM844 728h2v1h-2zM847 728h1v1h-1zM849 728h1v1h-1zM851 728h2v1h-2zM843 729h2v1h-2zM846 729h1v1h-1zM849 729h1v1h-1zM852 729h1v1h-1zM842 730h1v1h-1zM844 730h1v1h-1zM846 730h2v1h-2zM849 730h1v1h-1zM851 730h2v1h-2zM844 731h1v1h-1zM846 731h1v1h-1zM849 731h1v1h-1zM852 731h1v1h-1zM844 732h1v1h-1zM846 732h1v1h-1zM849 732h1v1h-1zM852 732h1v1h-1zM842 733h3v1h-3zM846 733h7v1h-7zM857 723h2v1h-2zM859 724h1v1h-1zM859 725h1v1h-1zM859 726h1v1h-1zM858 727h1v1h-1zM860 727h1v1h-1zM858 728h1v1h-1zM860 728h1v1h-1zM857 729h1v1h-1zM861 729h1v1h-1zM857 730h1v1h-1zM861 730h1v1h-1zM856 731h1v1h-1zM862 731h1v1h-1zM855 732h1v1h-1zM863 732h1v1h-1zM854 733h1v1h-1zM864 733h1v1h-1z"/>
<g font-family="Liberation Serif" font-size="13" font-weight="normal" fill="#000" stroke="#000" stroke-width="0.3"><text transform="translate(947.00 734) scale(0.634 1)" text-anchor="middle">C</text><text transform="translate(953.00 734) scale(0.586 1)" text-anchor="middle">A</text><text transform="translate(959.00 734) scale(0.761 1)" text-anchor="middle">P</text></g>
<g font-family="Liberation Serif" font-size="13" font-weight="normal" fill="#000" stroke="#000" stroke-width="0.3"><text transform="translate(972.00 734) scale(0.586 1)" text-anchor="middle">N</text><text transform="translate(978.00 734) scale(0.586 1)" text-anchor="middle">U</text><text transform="translate(984.00 734) scale(0.476 1)" text-anchor="middle">M</text></g>
<g transform="translate(10 742) scale(1.05) skewY(-6)"><path d="M2 2q3-2 8 0v7q-5-2-8 0z" fill="#F0551F"/><path d="M11 2.5q4 2 8 0v7q-4 2-8 0z" fill="#5FC12E"/><path d="M1 10.5q3-2 8 0v7q-5-2-8 0z" fill="#3E8DF2"/><path d="M10 11q4 2 8 0v7q-4 2-8 0z" fill="#F6C41A"/></g>
<g transform="translate(39 743) skewX(-13) scale(1.12)"><path fill="#fff" d="M1 2h13v1h-13zM4 3h1v1h-1zM10 3h1v1h-1zM4 4h1v1h-1zM10 4h1v1h-1zM4 5h1v1h-1zM10 5h1v1h-1zM4 6h1v1h-1zM10 6h1v1h-1zM4 7h1v1h-1zM10 7h1v1h-1zM0 8h15v1h-15zM4 9h1v1h-1zM10 9h1v1h-1zM4 10h1v1h-1zM10 10h1v1h-1zM4 11h1v1h-1zM10 11h1v1h-1zM4 12h1v1h-1zM10 12h1v1h-1zM3 13h1v1h-1zM10 13h1v1h-1zM3 14h1v1h-1zM10 14h1v1h-1zM2 15h1v1h-1zM10 15h1v1h-1zM1 16h1v1h-1zM10 16h1v1h-1zM21 1h1v1h-1zM28 1h1v1h-1zM21 2h1v1h-1zM28 2h1v1h-1zM21 3h1v1h-1zM28 3h1v1h-1zM21 4h1v1h-1zM27 4h1v1h-1zM18 5h6v1h-6zM27 5h1v1h-1zM30 5h1v1h-1zM20 6h1v1h-1zM23 6h1v1h-1zM26 6h1v1h-1zM31 6h1v1h-1zM20 7h1v1h-1zM23 7h1v1h-1zM25 7h8v1h-8zM20 8h1v1h-1zM23 8h1v1h-1zM26 8h1v1h-1zM32 8h1v1h-1zM20 9h1v1h-1zM23 9h1v1h-1zM19 10h1v1h-1zM22 10h1v1h-1zM26 10h6v1h-6zM20 11h1v1h-1zM22 11h1v1h-1zM26 11h1v1h-1zM31 11h1v1h-1zM21 12h1v1h-1zM26 12h1v1h-1zM31 12h1v1h-1zM20 13h1v1h-1zM22 13h1v1h-1zM26 13h1v1h-1zM31 13h1v1h-1zM19 14h1v1h-1zM23 14h1v1h-1zM26 14h1v1h-1zM31 14h1v1h-1zM18 15h1v1h-1zM26 15h6v1h-6zM26 16h1v1h-1zM31 16h1v1h-1z"/></g>
<path d="M112 752.5h10a5 5 0 1 0 -1.2 4" stroke="#5CB0F4" stroke-width="2.6" fill="none"/><path d="M110 758q-3 4 5 0M120 747q5-4 4 1" stroke="#A8D8FF" stroke-width="1.4" fill="none"/>
<rect x="132" y="745" width="15" height="15" fill="#FCE7B2" stroke="#F5B75E"/><circle cx="139.5" cy="752.5" r="5" fill="none" stroke="#D98A12" stroke-width="1.6"/><path d="M139.5 749v4h2.5" stroke="#B06A00" stroke-width="1.2" fill="none"/>
<rect x="156" y="747" width="12" height="12" rx="2" fill="#F0F8FF" stroke="#2050A0"/><rect x="158" y="749" width="7" height="7" fill="none" stroke="#404080"/><path d="M160 755l9-8" stroke="#303030" stroke-width="1.6"/><path d="M166 745l4 2" stroke="#C0D8F0" stroke-width="1.2"/>
<path d="M183 745l3 2.5-3 2.5M187 745l3 2.5-3 2.5" stroke="#CFE2FF" stroke-width="1.3" fill="none"/>
<rect x="208" y="745" width="15" height="15" fill="#fff"/><path d="M209 746h13v13h-5l-3-9-3 9h-2z" fill="#D7261E"/><path d="M212 758l4-11 4 11" stroke="#fff" stroke-width="1" fill="none"/>
<g font-family="Liberation Serif" font-size="12.5" font-weight="normal" fill="#fff" stroke="#fff" stroke-width="0.35"><text transform="translate(242.00 757) scale(0.609 1)" text-anchor="middle">A</text><text transform="translate(248.00 757) scale(0.800 1)" text-anchor="middle">d</text><text transform="translate(254.00 757) scale(0.800 1)" text-anchor="middle">o</text><text transform="translate(260.00 757) scale(0.800 1)" text-anchor="middle">b</text><text transform="translate(266.00 757) scale(0.800 1)" text-anchor="middle">e</text><text transform="translate(278.00 757) scale(0.660 1)" text-anchor="middle">R</text><text transform="translate(284.00 757) scale(0.800 1)" text-anchor="middle">e</text><text transform="translate(290.00 757) scale(0.800 1)" text-anchor="middle">a</text><text transform="translate(296.00 757) scale(0.800 1)" text-anchor="middle">d</text><text transform="translate(302.00 757) scale(0.800 1)" text-anchor="middle">e</text><text transform="translate(308.00 757) scale(0.800 1)" text-anchor="middle">r</text><text transform="translate(320.00 757) scale(0.800 1)" text-anchor="middle">7</text><text transform="translate(326.00 757) scale(0.800 1)" text-anchor="middle">.</text><text transform="translate(332.00 757) scale(0.800 1)" text-anchor="middle">0</text></g>
<text x="227" y="757" font-family="Liberation Sans" font-weight="bold" font-size="11" fill="#C8D8F0">3</text>
<path d="M346 752h6l-3 3z" fill="#fff"/>
<rect x="367" y="745" width="13" height="12" fill="none" stroke="#7CE07C" stroke-width="1.2"/><path d="M372 751l8 4-3 1 2 3-2 1-2-3-2 2z" fill="#1020C0"/>
<g font-family="Liberation Serif" font-size="12.5" font-weight="normal" fill="#fff" stroke="#fff" stroke-width="0.35"><text transform="translate(399.00 757) scale(0.720 1)" text-anchor="middle">E</text><text transform="translate(405.00 757) scale(0.800 1)" text-anchor="middle">a</text><text transform="translate(411.00 757) scale(0.800 1)" text-anchor="middle">s</text><text transform="translate(417.00 757) scale(0.800 1)" text-anchor="middle">y</text><text transform="translate(423.00 757) scale(0.660 1)" text-anchor="middle">B</text><text transform="translate(429.00 757) scale(0.800 1)" text-anchor="middle">u</text><text transform="translate(435.00 757) scale(0.800 1)" text-anchor="middle">i</text><text transform="translate(441.00 757) scale(0.800 1)" text-anchor="middle">l</text><text transform="translate(447.00 757) scale(0.800 1)" text-anchor="middle">d</text><text transform="translate(453.00 757) scale(0.800 1)" text-anchor="middle">e</text><text transform="translate(459.00 757) scale(0.800 1)" text-anchor="middle">r</text><text transform="translate(465.00 757) scale(0.800 1)" text-anchor="middle">8</text><text transform="translate(471.00 757) scale(0.800 1)" text-anchor="middle">0</text><text transform="translate(477.00 757) scale(0.800 1)" text-anchor="middle">0</text><text transform="translate(483.00 757) scale(0.800 1)" text-anchor="middle">0</text></g>
<text x="384" y="757" font-family="Liberation Sans" font-weight="bold" font-size="11" fill="#C8D8F0">2</text>
<path d="M502 752h6l-3 3z" fill="#fff"/>
<path d="M523 748h5l1 1h8v10h-14z" fill="#E8C66A" stroke="#8A6A20" stroke-width=".8"/><rect x="526" y="750" width="9" height="7" fill="#FFF6D6" opacity=".8"/>
<path fill="#fff" d="M542 747h1v1h-1zM548 747h1v1h-1zM543 748h1v1h-1zM548 748h1v1h-1zM547 749h1v1h-1zM549 749h1v1h-1zM544 750h1v1h-1zM546 750h1v1h-1zM550 750h1v1h-1zM544 751h2v1h-2zM548 751h1v1h-1zM551 751h2v1h-2zM543 752h1v1h-1zM549 752h1v1h-1zM543 753h1v1h-1zM546 753h6v1h-6zM542 754h1v1h-1zM550 754h1v1h-1zM542 755h1v1h-1zM547 755h3v1h-3zM542 756h1v1h-1zM549 756h1v1h-1zM550 757h1v1h-1zM557 747h1v1h-1zM557 748h1v1h-1zM561 748h4v1h-4zM555 749h5v1h-5zM561 749h1v1h-1zM564 749h1v1h-1zM557 750h1v1h-1zM561 750h1v1h-1zM564 750h1v1h-1zM557 751h1v1h-1zM561 751h1v1h-1zM564 751h1v1h-1zM554 752h8v1h-8zM564 752h1v1h-1zM557 753h1v1h-1zM561 753h1v1h-1zM564 753h1v1h-1zM556 754h1v1h-1zM561 754h1v1h-1zM564 754h1v1h-1zM555 755h1v1h-1zM558 755h2v1h-2zM561 755h1v1h-1zM563 755h2v1h-2zM555 756h3v1h-3zM559 756h1v1h-1zM561 756h1v1h-1zM561 757h1v1h-1zM569 747h1v1h-1zM571 747h1v1h-1zM574 747h1v1h-1zM569 748h1v1h-1zM571 748h1v1h-1zM574 748h1v1h-1zM568 749h1v1h-1zM571 749h1v1h-1zM574 749h1v1h-1zM568 750h1v1h-1zM570 750h7v1h-7zM567 751h2v1h-2zM571 751h1v1h-1zM574 751h1v1h-1zM566 752h1v1h-1zM568 752h1v1h-1zM571 752h1v1h-1zM574 752h1v1h-1zM568 753h9v1h-9zM568 754h1v1h-1zM568 755h1v1h-1zM571 755h1v1h-1zM574 755h1v1h-1zM568 756h1v1h-1zM570 756h1v1h-1zM575 756h1v1h-1zM568 757h2v1h-2zM576 757h1v1h-1zM583 747h1v1h-1zM583 748h1v1h-1zM583 749h1v1h-1zM587 749h1v1h-1zM578 750h4v1h-4zM583 750h2v1h-2zM586 750h1v1h-1zM581 751h1v1h-1zM583 751h1v1h-1zM585 751h1v1h-1zM581 752h1v1h-1zM583 752h1v1h-1zM585 752h1v1h-1zM580 753h1v1h-1zM583 753h1v1h-1zM586 753h1v1h-1zM580 754h1v1h-1zM583 754h1v1h-1zM586 754h1v1h-1zM579 755h1v1h-1zM583 755h1v1h-1zM587 755h1v1h-1zM578 756h1v1h-1zM581 756h1v1h-1zM583 756h1v1h-1zM588 756h1v1h-1zM582 757h1v1h-1z"/>
<g transform="translate(680 741)"><path d="M6 4h8l4 4v8l-4 4h-8l-4-4v-8z" fill="#141418"/><path d="M9 6.5q-5 0-5 6t5 6" stroke="#E8141A" stroke-width="3" fill="none"/><path d="M10 9h6v5h-4v5h-2z" fill="#F2EEE6"/><rect x="12" y="10.5" width="2" height="2" fill="#222"/><rect x="12" y="15" width="3" height="3" fill="#B09A60"/><path d="M11 5l2 2" stroke="#A0E0A0"/></g>
<path fill="#fff" d="M751 747h3v1h-3zM745 748h6v1h-6zM748 749h1v1h-1zM752 749h1v1h-1zM746 750h6v1h-6zM749 751h1v1h-1zM748 752h1v1h-1zM752 752h1v1h-1zM745 753h9v1h-9zM749 754h1v1h-1zM753 754h1v1h-1zM747 755h1v1h-1zM749 755h1v1h-1zM751 755h1v1h-1zM746 756h1v1h-1zM749 756h1v1h-1zM752 756h1v1h-1zM745 757h1v1h-1zM748 757h2v1h-2zM753 757h1v1h-1zM757 747h6v1h-6zM766 747h1v1h-1zM759 748h1v1h-1zM766 748h1v1h-1zM759 749h1v1h-1zM763 749h1v1h-1zM766 749h1v1h-1zM758 750h4v1h-4zM763 750h1v1h-1zM766 750h1v1h-1zM758 751h1v1h-1zM761 751h1v1h-1zM763 751h1v1h-1zM766 751h1v1h-1zM757 752h2v1h-2zM761 752h1v1h-1zM763 752h1v1h-1zM766 752h1v1h-1zM756 753h1v1h-1zM759 753h2v1h-2zM763 753h1v1h-1zM766 753h1v1h-1zM760 754h1v1h-1zM763 754h1v1h-1zM766 754h1v1h-1zM759 755h1v1h-1zM766 755h1v1h-1zM758 756h1v1h-1zM766 756h1v1h-1zM756 757h2v1h-2zM764 757h3v1h-3z"/><g font-family="Liberation Serif" font-size="12.5" font-weight="normal" fill="#fff" stroke="#fff" stroke-width="0.35"><text transform="translate(705.00 757) scale(0.495 1)" text-anchor="middle">M</text><text transform="translate(711.00 757) scale(0.720 1)" text-anchor="middle">E</text><text transform="translate(717.00 757) scale(0.720 1)" text-anchor="middle">L</text><text transform="translate(723.00 757) scale(0.791 1)" text-anchor="middle">S</text><text transform="translate(729.00 757) scale(0.609 1)" text-anchor="middle">O</text><text transform="translate(735.00 757) scale(0.791 1)" text-anchor="middle">F</text><text transform="translate(741.00 757) scale(0.720 1)" text-anchor="middle">T</text><text transform="translate(777.00 757) scale(0.609 1)" text-anchor="middle">G</text><text transform="translate(783.00 757) scale(0.609 1)" text-anchor="middle">X</text><text transform="translate(795.00 757) scale(0.609 1)" text-anchor="middle">D</text><text transform="translate(801.00 757) scale(0.800 1)" text-anchor="middle">.</text><text transform="translate(807.00 757) scale(0.800 1)" text-anchor="middle">.</text><text transform="translate(813.00 757) scale(0.800 1)" text-anchor="middle">.</text></g>
<rect x="838" y="748" width="17" height="10" rx="1" fill="#F4F4F0" stroke="#222"/><path d="M840 751h13M840 753.5h13M840 756h13" stroke="#555" stroke-width=".8" stroke-dasharray="1 1"/>
<rect x="862" y="745" width="13" height="14" fill="#FFFCE0" stroke="#111"/>
<text x="868.5" y="757" font-family="Liberation Sans" font-weight="bold" font-size="12" text-anchor="middle" fill="#000">?</text>
<rect x="909" y="745" width="8" height="9" fill="#303878" stroke="#8090C0" stroke-width=".8"/><rect x="904" y="749" width="8" height="9" fill="#283070" stroke="#90A0D0" stroke-width=".8"/><ellipse cx="908" cy="759" rx="3" ry="1.5" fill="#E0E8FF"/><ellipse cx="913" cy="756" rx="3" ry="1.5" fill="#C0D0F0"/>
<rect x="922" y="745" width="16" height="11" fill="#fff"/><rect x="922" y="756" width="16" height="6" fill="#000"/><rect x="923" y="757" width="5" height="3" fill="#30D030"/><rect x="929" y="757" width="8" height="3" fill="#F4F0E0"/>
<text x="930" y="755" font-family="Liberation Sans" font-weight="bold" font-size="11" text-anchor="middle" fill="#000" textLength="15" lengthAdjust="spacingAndGlyphs">285</text>
<path d="M944 745h8l4 4v8l-4 4h-8l-4-4v-8z" fill="#0A1ED8"/><path d="M941 754h3q1-5 2 0t2 0 2 0 2 0h4" stroke="#fff" stroke-width="1" fill="none"/>
<rect x="958" y="745" width="16" height="16" rx="4" fill="#F02020"/><circle cx="966" cy="753" r="4.8" fill="none" stroke="#FFF0E8" stroke-width="2.2"/><rect x="965" y="751" width="2" height="4" fill="#FFF0E8"/>
<text x="981" y="758" font-family="Liberation Sans" font-size="11.5" fill="#fff" textLength="29" lengthAdjust="spacingAndGlyphs">16:31</text></svg>
</body></html>
